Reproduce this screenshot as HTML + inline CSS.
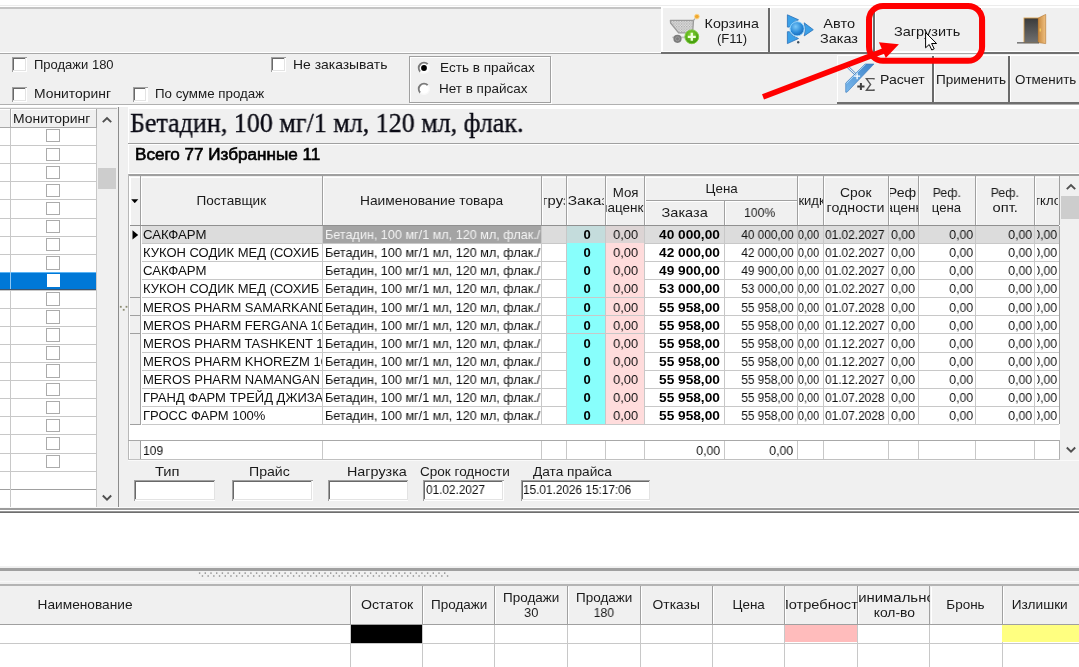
<!DOCTYPE html>
<html><head><meta charset="utf-8"><style>
html,body{margin:0;padding:0;}
body{width:1079px;height:667px;overflow:hidden;position:relative;background:#fff;font-family:"Liberation Sans", sans-serif;}
.a{position:absolute;}
.t{position:absolute;white-space:pre;will-change:transform;}
</style></head><body>
<div class="a" style="left:0px;top:5px;width:1079px;height:1px;background:#ececec;"></div>
<div class="a" style="left:0px;top:7px;width:661px;height:46px;background:#f0f0f0;"></div>
<div class="a" style="left:0px;top:7px;width:661px;height:2px;background:#c4c4c4;"></div>
<div class="a" style="left:0px;top:52px;width:661px;height:1px;background:#ffffff;"></div>
<div class="a" style="left:0px;top:53px;width:661px;height:1px;background:#a8a8a8;"></div>
<div class="a" style="left:661px;top:7px;width:418px;height:47px;background:#f0f0f0;"></div>
<div class="a" style="left:661px;top:7px;width:418px;height:1px;background:#ffffff;"></div>
<div class="a" style="left:661px;top:7px;width:2px;height:45px;background:#ffffff;"></div>
<div class="a" style="left:661px;top:51px;width:418px;height:1px;background:#ffffff;"></div>
<div class="a" style="left:661px;top:52px;width:418px;height:2px;background:#707070;"></div>
<div class="a" style="left:768px;top:8px;width:2px;height:44px;background:#6a6a6a;"></div>
<div class="a" style="left:770px;top:8px;width:1px;height:44px;background:#ffffff;"></div>
<div class="a" style="left:873px;top:8px;width:2px;height:44px;background:#6a6a6a;"></div>
<div class="a" style="left:875px;top:8px;width:1px;height:44px;background:#ffffff;"></div>
<div class="a" style="left:979px;top:8px;width:2px;height:44px;background:#6a6a6a;"></div>
<div class="a" style="left:981px;top:8px;width:1px;height:44px;background:#ffffff;"></div>
<div class="t" style="top:16.80px;font-size:13px;line-height:13px;color:#1a1a1a;left:707.23px;transform:scaleX(1.0963);transform-origin:50% 0;">Корзина</div>
<div class="t" style="top:31.60px;font-size:13px;line-height:13px;color:#1a1a1a;left:716.95px;transform:scaleX(1.0063);transform-origin:50% 0;">(F11)</div>
<div class="t" style="top:16.80px;font-size:13px;line-height:13px;color:#1a1a1a;left:824.63px;transform:scaleX(1.1184);transform-origin:50% 0;">Авто</div>
<div class="t" style="top:31.60px;font-size:13px;line-height:13px;color:#1a1a1a;left:822.05px;transform:scaleX(1.1111);transform-origin:50% 0;">Заказ</div>
<div class="t" style="top:24.70px;font-size:13px;line-height:13px;color:#1a1a1a;left:893.70px;transform:scaleX(1.1152);transform-origin:0 0;">Загрузить</div>
<div class="a" style="left:0px;top:54px;width:1079px;height:50px;background:#f0f0f0;"></div>
<div class="a" style="left:0px;top:104px;width:1079px;height:1px;background:#b0b0b0;"></div>
<div class="a" style="left:0px;top:105px;width:1079px;height:2px;background:#ffffff;"></div>
<div class="a" style="left:12px;top:57px;width:15px;height:15px;background:#ffffff;"></div>
<div class="a" style="left:12px;top:57px;width:15px;height:1.1px;background:#a0a0a0;"></div>
<div class="a" style="left:12px;top:57px;width:1.1px;height:15px;background:#a0a0a0;"></div>
<div class="a" style="left:13.1px;top:58.1px;width:12.8px;height:1.1px;background:#696969;"></div>
<div class="a" style="left:13.1px;top:58.1px;width:1.1px;height:12.8px;background:#696969;"></div>
<div class="a" style="left:13.1px;top:69.8px;width:12.8px;height:1.1px;background:#e3e3e3;"></div>
<div class="a" style="left:24.8px;top:58.1px;width:1.1px;height:12.8px;background:#e3e3e3;"></div>
<div class="t" style="top:57.50px;font-size:13px;line-height:13px;color:#1a1a1a;left:33.60px;">Продажи 180</div>
<div class="a" style="left:12px;top:87px;width:15px;height:15px;background:#ffffff;"></div>
<div class="a" style="left:12px;top:87px;width:15px;height:1.1px;background:#a0a0a0;"></div>
<div class="a" style="left:12px;top:87px;width:1.1px;height:15px;background:#a0a0a0;"></div>
<div class="a" style="left:13.1px;top:88.1px;width:12.8px;height:1.1px;background:#696969;"></div>
<div class="a" style="left:13.1px;top:88.1px;width:1.1px;height:12.8px;background:#696969;"></div>
<div class="a" style="left:13.1px;top:99.8px;width:12.8px;height:1.1px;background:#e3e3e3;"></div>
<div class="a" style="left:24.8px;top:88.1px;width:1.1px;height:12.8px;background:#e3e3e3;"></div>
<div class="t" style="top:87.00px;font-size:13px;line-height:13px;color:#1a1a1a;left:33.60px;transform:scaleX(1.0678);transform-origin:0 0;">Мониторинг</div>
<div class="a" style="left:132.6px;top:87px;width:15px;height:15px;background:#ffffff;"></div>
<div class="a" style="left:132.6px;top:87px;width:15px;height:1.1px;background:#a0a0a0;"></div>
<div class="a" style="left:132.6px;top:87px;width:1.1px;height:15px;background:#a0a0a0;"></div>
<div class="a" style="left:133.7px;top:88.1px;width:12.8px;height:1.1px;background:#696969;"></div>
<div class="a" style="left:133.7px;top:88.1px;width:1.1px;height:12.8px;background:#696969;"></div>
<div class="a" style="left:133.7px;top:99.8px;width:12.8px;height:1.1px;background:#e3e3e3;"></div>
<div class="a" style="left:145.4px;top:88.1px;width:1.1px;height:12.8px;background:#e3e3e3;"></div>
<div class="t" style="top:87.00px;font-size:13px;line-height:13px;color:#1a1a1a;left:155.00px;transform:scaleX(1.0246);transform-origin:0 0;">По сумме продаж</div>
<div class="a" style="left:271.2px;top:56.8px;width:15px;height:15px;background:#ffffff;"></div>
<div class="a" style="left:271.2px;top:56.8px;width:15px;height:1.1px;background:#a0a0a0;"></div>
<div class="a" style="left:271.2px;top:56.8px;width:1.1px;height:15px;background:#a0a0a0;"></div>
<div class="a" style="left:272.3px;top:57.9px;width:12.8px;height:1.1px;background:#696969;"></div>
<div class="a" style="left:272.3px;top:57.9px;width:1.1px;height:12.8px;background:#696969;"></div>
<div class="a" style="left:272.3px;top:69.6px;width:12.8px;height:1.1px;background:#e3e3e3;"></div>
<div class="a" style="left:284.0px;top:57.9px;width:1.1px;height:12.8px;background:#e3e3e3;"></div>
<div class="t" style="top:57.50px;font-size:13px;line-height:13px;color:#1a1a1a;left:293.10px;transform:scaleX(1.0701);transform-origin:0 0;">Не заказывать</div>
<div class="a" style="left:409px;top:56px;width:142px;height:47px;border:1px solid #a0a0a0;box-sizing:border-box;box-shadow:inset 1px 1px 0 #fff, 1px 1px 0 #fff;"></div>
<svg class="a" style="left:415.9px;top:60.0px;" width="16" height="16" viewBox="0 0 16 16"><circle cx="8" cy="8" r="5.6" fill="#ffffff"/><path d="M4.25 11.75 A5.3 5.3 0 0 1 11.75 4.25" fill="none" stroke="#7a7a7a" stroke-width="1.8"/><path d="M11.75 4.25 A5.3 5.3 0 0 1 4.25 11.75" fill="none" stroke="#f8f8f8" stroke-width="1.2"/><circle cx="8" cy="8" r="2.9" fill="#000"/></svg>
<div class="t" style="top:61.30px;font-size:13px;line-height:13px;color:#1a1a1a;left:440.10px;transform:scaleX(1.0432);transform-origin:0 0;">Есть в прайсах</div>
<svg class="a" style="left:415.9px;top:80.7px;" width="16" height="16" viewBox="0 0 16 16"><circle cx="8" cy="8" r="5.6" fill="#ffffff"/><path d="M4.25 11.75 A5.3 5.3 0 0 1 11.75 4.25" fill="none" stroke="#7a7a7a" stroke-width="1.8"/><path d="M11.75 4.25 A5.3 5.3 0 0 1 4.25 11.75" fill="none" stroke="#f8f8f8" stroke-width="1.2"/></svg>
<div class="t" style="top:82.00px;font-size:13px;line-height:13px;color:#1a1a1a;left:439.10px;transform:scaleX(1.0368);transform-origin:0 0;">Нет в прайсах</div>
<div class="a" style="left:837px;top:55px;width:242px;height:49px;background:#f0f0f0;"></div>
<div class="a" style="left:837px;top:55px;width:242px;height:1px;background:#ffffff;"></div>
<div class="a" style="left:837px;top:55px;width:1px;height:48px;background:#ffffff;"></div>
<div class="a" style="left:837px;top:102px;width:242px;height:2px;background:#6f6f6f;"></div>
<div class="a" style="left:932px;top:56px;width:1.5px;height:46px;background:#6a6a6a;"></div>
<div class="a" style="left:933.5px;top:56px;width:1px;height:46px;background:#ffffff;"></div>
<div class="a" style="left:1008px;top:56px;width:1.5px;height:46px;background:#6a6a6a;"></div>
<div class="a" style="left:1009.5px;top:56px;width:1px;height:46px;background:#ffffff;"></div>
<div class="t" style="top:72.70px;font-size:13px;line-height:13px;color:#1a1a1a;left:879.90px;transform:scaleX(1.0808);transform-origin:0 0;">Расчет</div>
<div class="t" style="top:72.70px;font-size:13px;line-height:13px;color:#1a1a1a;left:935.80px;transform:scaleX(1.0436);transform-origin:0 0;">Применить</div>
<div class="t" style="top:72.70px;font-size:13px;line-height:13px;color:#1a1a1a;left:1015.10px;transform:scaleX(1.0319);transform-origin:0 0;">Отменить</div>
<div class="a" style="left:0px;top:107px;width:128px;height:402px;background:#f0f0f0;"></div>
<div class="a" style="left:0px;top:108px;width:117px;height:1px;background:#c0c0c0;"></div>
<div class="a" style="left:0px;top:109px;width:97px;height:18px;background:#f0f0f0;"></div>
<div class="a" style="left:0px;top:109px;width:97px;height:1px;background:#ffffff;"></div>
<div class="a" style="left:0px;top:126.6px;width:97px;height:1px;background:#a8a8a8;"></div>
<div class="a" style="left:10px;top:109px;width:1px;height:18px;background:#a8a8a8;"></div>
<div class="a" style="left:11px;top:110px;width:1px;height:16px;background:#ffffff;"></div>
<div class="a" style="left:96px;top:109px;width:1px;height:18px;background:#a8a8a8;"></div>
<div class="t" style="top:112.20px;font-size:13px;line-height:13px;color:#1a1a1a;left:12.80px;transform:scaleX(1.0720);transform-origin:0 0;">Мониторинг</div>
<div class="a" style="left:0px;top:127.6px;width:96px;height:380px;background:#ffffff;"></div>
<div class="a" style="left:0px;top:145.2px;width:96px;height:1px;background:#c8c8c8;"></div>
<div class="a" style="left:0px;top:163.27999999999997px;width:96px;height:1px;background:#c8c8c8;"></div>
<div class="a" style="left:0px;top:181.35999999999999px;width:96px;height:1px;background:#c8c8c8;"></div>
<div class="a" style="left:0px;top:199.44px;width:96px;height:1px;background:#c8c8c8;"></div>
<div class="a" style="left:0px;top:217.51999999999998px;width:96px;height:1px;background:#c8c8c8;"></div>
<div class="a" style="left:0px;top:235.59999999999997px;width:96px;height:1px;background:#c8c8c8;"></div>
<div class="a" style="left:0px;top:253.67999999999998px;width:96px;height:1px;background:#c8c8c8;"></div>
<div class="a" style="left:0px;top:271.76px;width:96px;height:1px;background:#c8c8c8;"></div>
<div class="a" style="left:0px;top:289.84px;width:96px;height:1px;background:#c8c8c8;"></div>
<div class="a" style="left:0px;top:307.91999999999996px;width:96px;height:1px;background:#c8c8c8;"></div>
<div class="a" style="left:0px;top:326.0px;width:96px;height:1px;background:#c8c8c8;"></div>
<div class="a" style="left:0px;top:344.08px;width:96px;height:1px;background:#c8c8c8;"></div>
<div class="a" style="left:0px;top:362.15999999999997px;width:96px;height:1px;background:#c8c8c8;"></div>
<div class="a" style="left:0px;top:380.23999999999995px;width:96px;height:1px;background:#c8c8c8;"></div>
<div class="a" style="left:0px;top:398.31999999999994px;width:96px;height:1px;background:#c8c8c8;"></div>
<div class="a" style="left:0px;top:416.4px;width:96px;height:1px;background:#c8c8c8;"></div>
<div class="a" style="left:0px;top:434.47999999999996px;width:96px;height:1px;background:#c8c8c8;"></div>
<div class="a" style="left:0px;top:452.55999999999995px;width:96px;height:1px;background:#c8c8c8;"></div>
<div class="a" style="left:0px;top:471.0px;width:96px;height:1px;background:#c8c8c8;"></div>
<div class="a" style="left:10px;top:127.6px;width:1px;height:380px;background:#c8c8c8;"></div>
<div class="a" style="left:96px;top:127.6px;width:1px;height:380px;background:#c8c8c8;"></div>
<div class="a" style="left:46.4px;top:128.9px;width:13.6px;height:13.6px;border:1.2px solid #ababab;box-sizing:border-box;"></div>
<div class="a" style="left:46.4px;top:147.5px;width:13.6px;height:13.6px;border:1.2px solid #ababab;box-sizing:border-box;"></div>
<div class="a" style="left:46.4px;top:165.57999999999998px;width:13.6px;height:13.6px;border:1.2px solid #ababab;box-sizing:border-box;"></div>
<div class="a" style="left:46.4px;top:183.66px;width:13.6px;height:13.6px;border:1.2px solid #ababab;box-sizing:border-box;"></div>
<div class="a" style="left:46.4px;top:201.74px;width:13.6px;height:13.6px;border:1.2px solid #ababab;box-sizing:border-box;"></div>
<div class="a" style="left:46.4px;top:219.82px;width:13.6px;height:13.6px;border:1.2px solid #ababab;box-sizing:border-box;"></div>
<div class="a" style="left:46.4px;top:237.89999999999998px;width:13.6px;height:13.6px;border:1.2px solid #ababab;box-sizing:border-box;"></div>
<div class="a" style="left:46.4px;top:255.98px;width:13.6px;height:13.6px;border:1.2px solid #ababab;box-sizing:border-box;"></div>
<div class="a" style="left:0px;top:271.9px;width:96px;height:17.5px;background:#0078d7;"></div>
<div class="a" style="left:0px;top:271.9px;width:96px;height:1px;background:#59b4f5;"></div>
<div class="a" style="left:0px;top:288.6px;width:96px;height:1px;background:#3a5470;"></div>
<div class="a" style="left:10px;top:271.9px;width:1px;height:17.5px;background:#8ec8f5;"></div>
<div class="a" style="left:46.6px;top:273.8px;width:13.2px;height:13.7px;background:#ffffff;"></div>
<div class="a" style="left:46.4px;top:292.14px;width:13.6px;height:13.6px;border:1.2px solid #ababab;box-sizing:border-box;"></div>
<div class="a" style="left:46.4px;top:310.21999999999997px;width:13.6px;height:13.6px;border:1.2px solid #ababab;box-sizing:border-box;"></div>
<div class="a" style="left:46.4px;top:328.3px;width:13.6px;height:13.6px;border:1.2px solid #ababab;box-sizing:border-box;"></div>
<div class="a" style="left:46.4px;top:346.38px;width:13.6px;height:13.6px;border:1.2px solid #ababab;box-sizing:border-box;"></div>
<div class="a" style="left:46.4px;top:364.46px;width:13.6px;height:13.6px;border:1.2px solid #ababab;box-sizing:border-box;"></div>
<div class="a" style="left:46.4px;top:382.53999999999996px;width:13.6px;height:13.6px;border:1.2px solid #ababab;box-sizing:border-box;"></div>
<div class="a" style="left:46.4px;top:400.61999999999995px;width:13.6px;height:13.6px;border:1.2px solid #ababab;box-sizing:border-box;"></div>
<div class="a" style="left:46.4px;top:418.7px;width:13.6px;height:13.6px;border:1.2px solid #ababab;box-sizing:border-box;"></div>
<div class="a" style="left:46.4px;top:436.78px;width:13.6px;height:13.6px;border:1.2px solid #ababab;box-sizing:border-box;"></div>
<div class="a" style="left:46.4px;top:454.85999999999996px;width:13.6px;height:13.6px;border:1.2px solid #ababab;box-sizing:border-box;"></div>
<div class="a" style="left:0px;top:489.4px;width:96px;height:1px;background:#a0a0a0;"></div>
<div class="a" style="left:0px;top:490.4px;width:96px;height:17px;background:#ffffff;"></div>
<div class="a" style="left:10px;top:489.4px;width:1px;height:18px;background:#c8c8c8;"></div>
<div class="a" style="left:0px;top:507.4px;width:117px;height:1px;background:#c8c8c8;"></div>
<div class="a" style="left:97px;top:109px;width:20px;height:398.4px;background:#f0f0f0;"></div>
<div class="a" style="left:98.3px;top:168.3px;width:18px;height:20.4px;background:#cdcdcd;"></div>
<div class="a" style="left:118px;top:107px;width:1px;height:402.7px;background:#8c8c8c;"></div>
<svg class="a" style="left:119px;top:305px;" width="10" height="7" viewBox="0 0 10 7"><rect x="0.9" y="0.9" width="1.8" height="1.8" fill="#8a8a70"/><rect x="6.6" y="0.9" width="1.8" height="1.8" fill="#8a8a70"/><rect x="3.8" y="3.9" width="1.8" height="1.8" fill="#8a8a70"/></svg>
<svg class="a" style="left:101px;top:114px;" width="12" height="10" viewBox="0 0 12 10"><path d="M1.8 8.2 L6 4 L10.2 8.2" fill="none" stroke="#505050" stroke-width="1.9"/></svg>
<svg class="a" style="left:101px;top:493px;" width="12" height="10" viewBox="0 0 12 10"><path d="M1.8 2.5 L6 6.7 L10.2 2.5" fill="none" stroke="#505050" stroke-width="1.9"/></svg>
<div class="a" style="left:128px;top:109px;width:951px;height:400px;background:#f0f0f0;"></div>
<div class="a" style="left:128px;top:109px;width:1px;height:400px;background:#ffffff;"></div>
<div class="t" style="top:109.89px;font-size:27px;line-height:27px;color:#0a0a14;font-family:'Liberation Serif', serif;-webkit-text-stroke:0.35px #0a0a14;left:129.60px;transform:scaleX(0.9635);transform-origin:0 0;">Бетадин, 100 мг/1 мл, 120 мл, флак.</div>
<div class="a" style="left:128px;top:143px;width:951px;height:1px;background:#a0a0a0;"></div>
<div class="a" style="left:128px;top:144px;width:951px;height:1px;background:#ffffff;"></div>
<div class="t" style="top:146.66px;font-size:16px;line-height:16px;color:#000;-webkit-text-stroke:0.6px #000;left:134.70px;transform:scaleX(1.0681);transform-origin:0 0;">Всего 77 Избранные 11</div>
<div class="a" style="left:128px;top:173.3px;width:951px;height:1px;background:#ffffff;"></div>
<div class="a" style="left:128.3px;top:174.4px;width:950.7px;height:285px;background:#ffffff;"></div>
<div class="a" style="left:128.3px;top:174.4px;width:950.7px;height:1.2px;background:#a0a0a0;"></div>
<div class="a" style="left:128.3px;top:174.4px;width:1.2px;height:285px;background:#b8b8b8;"></div>
<div class="a" style="left:129.5px;top:175.6px;width:929.5px;height:49.4px;background:#f0f0f0;"></div>
<div class="a" style="left:129.5px;top:176.5px;width:929.5px;height:1px;background:#ffffff;"></div>
<div class="a" style="left:129.5px;top:224.9px;width:929.5px;height:1.1px;background:#909090;"></div>
<div class="a" style="left:644.5px;top:200px;width:152.7px;height:1px;background:#a0a0a0;"></div>
<div class="a" style="left:645.5px;top:201px;width:151.7px;height:1px;background:#ffffff;"></div>
<div class="a" style="left:140px;top:175.6px;width:1px;height:49.400000000000006px;background:#a0a0a0;"></div>
<div class="a" style="left:141px;top:176.6px;width:1px;height:48.400000000000006px;background:#ffffff;"></div>
<div class="a" style="left:322px;top:175.6px;width:1px;height:49.400000000000006px;background:#a0a0a0;"></div>
<div class="a" style="left:323px;top:176.6px;width:1px;height:48.400000000000006px;background:#ffffff;"></div>
<div class="a" style="left:541px;top:175.6px;width:1px;height:49.400000000000006px;background:#a0a0a0;"></div>
<div class="a" style="left:542px;top:176.6px;width:1px;height:48.400000000000006px;background:#ffffff;"></div>
<div class="a" style="left:566px;top:175.6px;width:1px;height:49.400000000000006px;background:#a0a0a0;"></div>
<div class="a" style="left:567px;top:176.6px;width:1px;height:48.400000000000006px;background:#ffffff;"></div>
<div class="a" style="left:605px;top:175.6px;width:1px;height:49.400000000000006px;background:#a0a0a0;"></div>
<div class="a" style="left:606px;top:176.6px;width:1px;height:48.400000000000006px;background:#ffffff;"></div>
<div class="a" style="left:644px;top:175.6px;width:1px;height:49.400000000000006px;background:#a0a0a0;"></div>
<div class="a" style="left:645px;top:176.6px;width:1px;height:48.400000000000006px;background:#ffffff;"></div>
<div class="a" style="left:724px;top:201px;width:1px;height:24px;background:#a0a0a0;"></div>
<div class="a" style="left:725px;top:202px;width:1px;height:23px;background:#ffffff;"></div>
<div class="a" style="left:797px;top:175.6px;width:1px;height:49.400000000000006px;background:#a0a0a0;"></div>
<div class="a" style="left:798px;top:176.6px;width:1px;height:48.400000000000006px;background:#ffffff;"></div>
<div class="a" style="left:823px;top:175.6px;width:1px;height:49.400000000000006px;background:#a0a0a0;"></div>
<div class="a" style="left:824px;top:176.6px;width:1px;height:48.400000000000006px;background:#ffffff;"></div>
<div class="a" style="left:888px;top:175.6px;width:1px;height:49.400000000000006px;background:#a0a0a0;"></div>
<div class="a" style="left:889px;top:176.6px;width:1px;height:48.400000000000006px;background:#ffffff;"></div>
<div class="a" style="left:918px;top:175.6px;width:1px;height:49.400000000000006px;background:#a0a0a0;"></div>
<div class="a" style="left:919px;top:176.6px;width:1px;height:48.400000000000006px;background:#ffffff;"></div>
<div class="a" style="left:975px;top:175.6px;width:1px;height:49.400000000000006px;background:#a0a0a0;"></div>
<div class="a" style="left:976px;top:176.6px;width:1px;height:48.400000000000006px;background:#ffffff;"></div>
<div class="a" style="left:1034px;top:175.6px;width:1px;height:49.400000000000006px;background:#a0a0a0;"></div>
<div class="a" style="left:1035px;top:176.6px;width:1px;height:48.400000000000006px;background:#ffffff;"></div>
<div class="a" style="left:1059px;top:175.6px;width:1px;height:49.400000000000006px;background:#a0a0a0;"></div>
<div class="a" style="left:1060px;top:176.6px;width:1px;height:48.400000000000006px;background:#ffffff;"></div>
<div class="a" style="left:130px;top:176.5px;width:1px;height:48.5px;background:#ffffff;"></div>
<svg class="a" style="left:131px;top:198.5px;" width="8" height="4.5" viewBox="0 0 8 4.5"><path d="M0.2 0.3 L7.3 0.3 L3.75 4.2 Z" fill="#000"/></svg>
<div class="t" style="top:194.10px;font-size:13px;line-height:13px;color:#1a1a1a;left:198.46px;transform:scaleX(1.0439);transform-origin:50% 0;">Поставщик</div>
<div class="t" style="top:194.10px;font-size:13px;line-height:13px;color:#1a1a1a;left:364.39px;transform:scaleX(1.0590);transform-origin:50% 0;">Наименование товара</div>
<div class="a" style="left:543.6px;top:0;width:21.899999999999977px;height:667px;overflow:hidden"><div class="a" style="left:-543.6px;top:0;width:1079px;height:667px"><div class="t" style="top:194.20px;font-size:13px;line-height:13px;color:#1a1a1a;left:526.55px;transform:scaleX(1.1329);transform-origin:50% 0;">Нагрузка</div></div></div>
<div class="a" style="left:566.6px;top:0;width:37.799999999999955px;height:667px;overflow:hidden"><div class="a" style="left:-566.6px;top:0;width:1079px;height:667px"><div class="t" style="top:193.80px;font-size:13px;line-height:13px;color:#1a1a1a;left:570.95px;transform:scaleX(1.1962);transform-origin:50% 0;">Заказ</div></div></div>
<div class="a" style="left:606.0px;top:0;width:37.60000000000002px;height:667px;overflow:hidden"><div class="a" style="left:-606.0px;top:0;width:1079px;height:667px"><div class="t" style="top:186.00px;font-size:13px;line-height:13px;color:#1a1a1a;left:612.58px;transform:scaleX(1.0218);transform-origin:50% 0;">Моя</div></div></div>
<div class="a" style="left:606.0px;top:0;width:37.60000000000002px;height:667px;overflow:hidden"><div class="a" style="left:-606.0px;top:0;width:1079px;height:667px"><div class="t" style="top:201.30px;font-size:13px;line-height:13px;color:#1a1a1a;left:600.54px;transform:scaleX(1.0400);transform-origin:50% 0;">наценка</div></div></div>
<div class="t" style="top:181.80px;font-size:13px;line-height:13px;color:#1a1a1a;left:705.77px;transform:scaleX(1.0267);transform-origin:50% 0;">Цена</div>
<div class="t" style="top:205.90px;font-size:13px;line-height:13px;color:#1a1a1a;left:663.83px;transform:scaleX(1.1175);transform-origin:50% 0;">Заказа</div>
<div class="t" style="top:205.90px;font-size:13px;line-height:13px;color:#1a1a1a;left:743.08px;transform:scaleX(0.9383);transform-origin:50% 0;">100%</div>
<div class="a" style="left:798.3px;top:0;width:25.100000000000023px;height:667px;overflow:hidden"><div class="a" style="left:-798.3px;top:0;width:1079px;height:667px"><div class="t" style="top:193.90px;font-size:13px;line-height:13px;color:#1a1a1a;left:788.93px;">Скидка</div></div></div>
<div class="t" style="top:186.00px;font-size:13px;line-height:13px;color:#1a1a1a;left:840.83px;transform:scaleX(1.0661);transform-origin:50% 0;">Срок</div>
<div class="t" style="top:201.30px;font-size:13px;line-height:13px;color:#1a1a1a;left:828.74px;transform:scaleX(1.0918);transform-origin:50% 0;">годности</div>
<div class="a" style="left:890.3px;top:0;width:27.300000000000068px;height:667px;overflow:hidden"><div class="a" style="left:-890.3px;top:0;width:1079px;height:667px"><div class="t" style="top:186.00px;font-size:13px;line-height:13px;color:#1a1a1a;left:888.78px;transform:scaleX(1.0872);transform-origin:50% 0;">Реф</div></div></div>
<div class="a" style="left:890.3px;top:0;width:27.300000000000068px;height:667px;overflow:hidden"><div class="a" style="left:-890.3px;top:0;width:1079px;height:667px"><div class="t" style="top:201.30px;font-size:13px;line-height:13px;color:#1a1a1a;left:878.84px;transform:scaleX(1.0400);transform-origin:50% 0;">наценка</div></div></div>
<div class="t" style="top:186.00px;font-size:13px;line-height:13px;color:#1a1a1a;left:931.98px;transform:scaleX(0.9548);transform-origin:50% 0;">Реф.</div>
<div class="t" style="top:201.30px;font-size:13px;line-height:13px;color:#1a1a1a;left:932.32px;transform:scaleX(1.0120);transform-origin:50% 0;">цена</div>
<div class="t" style="top:186.00px;font-size:13px;line-height:13px;color:#1a1a1a;left:990.38px;transform:scaleX(0.9548);transform-origin:50% 0;">Реф.</div>
<div class="t" style="top:201.30px;font-size:13px;line-height:13px;color:#1a1a1a;left:994.00px;transform:scaleX(1.1291);transform-origin:50% 0;">опт.</div>
<div class="a" style="left:1037.3px;top:0;width:21.200000000000045px;height:667px;overflow:hidden"><div class="a" style="left:-1037.3px;top:0;width:1079px;height:667px"><div class="t" style="top:193.90px;font-size:13px;line-height:13px;color:#1a1a1a;left:1023.90px;">Отклон</div></div></div>
<div class="a" style="left:129.5px;top:226.0px;width:10.9px;height:17.71999999999999px;background:#f0f0f0;"></div>
<div class="a" style="left:129.5px;top:242.82px;width:11px;height:0.9px;background:#a0a0a0;"></div>
<div class="a" style="left:140.4px;top:226.0px;width:1.1px;height:17.71999999999999px;background:#a0a0a0;"></div>
<div class="a" style="left:141.5px;top:226.0px;width:917.5px;height:16.819999999999993px;background:#dcdcdc;"></div>
<div class="a" style="left:322.6px;top:226.0px;width:218.5px;height:16.819999999999993px;background:#a4a4a4;"></div>
<div class="a" style="left:566.6px;top:226.0px;width:38.299999999999955px;height:16.819999999999993px;background:#c4dcdc;"></div>
<div class="a" style="left:606.0px;top:226.0px;width:37.60000000000002px;height:16.819999999999993px;background:#dcd4d4;"></div>
<svg class="a" style="left:132px;top:229.5px;" width="7" height="10" viewBox="0 0 7 10"><path d="M0.5 0.3 L6.2 4.9 L0.5 9.5 Z" fill="#000"/></svg>
<div class="a" style="left:141.5px;top:242.82px;width:917.5px;height:0.9px;background:#c8c8c8;"></div>
<div class="a" style="left:141.5px;top:0;width:180.89999999999998px;height:667px;overflow:hidden"><div class="a" style="left:-141.5px;top:0;width:1079px;height:667px"><div class="t" style="top:228.10px;font-size:13px;line-height:13px;color:#101010;left:142.80px;transform:scaleX(1.0155);transform-origin:0 0;">САКФАРМ</div></div></div>
<div class="a" style="left:323.5px;top:0;width:218.5px;height:667px;overflow:hidden"><div class="a" style="left:-323.5px;top:0;width:1079px;height:667px"><div class="t" style="top:228.10px;font-size:13px;line-height:13px;color:#f4f4f4;left:324.60px;transform:scaleX(0.9699);transform-origin:0 0;">Бетадин, 100 мг/1 мл, 120 мл, флак./</div></div></div>
<div class="t" style="top:228.10px;font-size:13px;line-height:13px;color:#000;font-weight:700;left:586.50px;transform:translateX(-50%);">0</div>
<div class="t" style="top:228.10px;font-size:13px;line-height:13px;color:#101010;left:612.54px;transform:scaleX(0.9877);transform-origin:50% 0;">0,00</div>
<div class="t" style="top:228.10px;font-size:13px;line-height:13px;color:#000;font-weight:700;right:358.90px;transform:scaleX(1.0511);transform-origin:100% 0;">40 000,00</div>
<div class="t" style="top:228.10px;font-size:13px;line-height:13px;color:#101010;right:284.90px;transform:scaleX(0.9076);transform-origin:100% 0;">40 000,00</div>
<div class="t" style="top:228.10px;font-size:13px;line-height:13px;color:#101010;right:259.40px;transform:scaleX(0.8494);transform-origin:100% 0;">0,00</div>
<div class="t" style="top:228.10px;font-size:13px;line-height:13px;color:#101010;left:825.30px;transform:scaleX(0.9158);transform-origin:0 0;">01.02.2027</div>
<div class="t" style="top:228.10px;font-size:13px;line-height:13px;color:#101010;left:891.20px;transform:scaleX(0.9521);transform-origin:0 0;">0,00</div>
<div class="t" style="top:228.10px;font-size:13px;line-height:13px;color:#101010;right:106.10px;transform:scaleX(0.9521);transform-origin:100% 0;">0,00</div>
<div class="t" style="top:228.10px;font-size:13px;line-height:13px;color:#101010;right:47.10px;transform:scaleX(0.9521);transform-origin:100% 0;">0,00</div>
<div class="a" style="left:1037.0px;top:0;width:22.40000000000009px;height:667px;overflow:hidden"><div class="a" style="left:-1037.0px;top:0;width:1079px;height:667px"><div class="t" style="top:228.10px;font-size:13px;line-height:13px;color:#101010;right:22.10px;transform:scaleX(0.9521);transform-origin:100% 0;">0,00</div></div></div>
<div class="a" style="left:129.5px;top:243.22px;width:10.9px;height:18.619999999999997px;background:#f0f0f0;"></div>
<div class="a" style="left:129.5px;top:260.94px;width:11px;height:0.9px;background:#a0a0a0;"></div>
<div class="a" style="left:140.4px;top:243.22px;width:1.1px;height:18.619999999999997px;background:#a0a0a0;"></div>
<div class="a" style="left:566.6px;top:243.22px;width:38.299999999999955px;height:17.72px;background:#88fffc;"></div>
<div class="a" style="left:606.0px;top:243.22px;width:37.60000000000002px;height:17.72px;background:#ffdcdc;"></div>
<div class="a" style="left:141.5px;top:260.94px;width:917.5px;height:0.9px;background:#c8c8c8;"></div>
<div class="a" style="left:141.5px;top:0;width:180.89999999999998px;height:667px;overflow:hidden"><div class="a" style="left:-141.5px;top:0;width:1079px;height:667px"><div class="t" style="top:246.22px;font-size:13px;line-height:13px;color:#101010;left:142.80px;">КУКОН СОДИК МЕД (СОХИБ (ФАРМ)</div></div></div>
<div class="a" style="left:323.5px;top:0;width:218.5px;height:667px;overflow:hidden"><div class="a" style="left:-323.5px;top:0;width:1079px;height:667px"><div class="t" style="top:246.22px;font-size:13px;line-height:13px;color:#101010;left:324.60px;transform:scaleX(0.9699);transform-origin:0 0;">Бетадин, 100 мг/1 мл, 120 мл, флак./</div></div></div>
<div class="t" style="top:246.22px;font-size:13px;line-height:13px;color:#000;font-weight:700;left:586.50px;transform:translateX(-50%);">0</div>
<div class="t" style="top:246.22px;font-size:13px;line-height:13px;color:#101010;left:612.54px;transform:scaleX(0.9877);transform-origin:50% 0;">0,00</div>
<div class="t" style="top:246.22px;font-size:13px;line-height:13px;color:#000;font-weight:700;right:358.90px;transform:scaleX(1.0511);transform-origin:100% 0;">42 000,00</div>
<div class="t" style="top:246.22px;font-size:13px;line-height:13px;color:#101010;right:284.90px;transform:scaleX(0.9076);transform-origin:100% 0;">42 000,00</div>
<div class="t" style="top:246.22px;font-size:13px;line-height:13px;color:#101010;right:259.40px;transform:scaleX(0.8494);transform-origin:100% 0;">0,00</div>
<div class="t" style="top:246.22px;font-size:13px;line-height:13px;color:#101010;left:825.30px;transform:scaleX(0.9158);transform-origin:0 0;">01.02.2027</div>
<div class="t" style="top:246.22px;font-size:13px;line-height:13px;color:#101010;left:891.20px;transform:scaleX(0.9521);transform-origin:0 0;">0,00</div>
<div class="t" style="top:246.22px;font-size:13px;line-height:13px;color:#101010;right:106.10px;transform:scaleX(0.9521);transform-origin:100% 0;">0,00</div>
<div class="t" style="top:246.22px;font-size:13px;line-height:13px;color:#101010;right:47.10px;transform:scaleX(0.9521);transform-origin:100% 0;">0,00</div>
<div class="a" style="left:1037.0px;top:0;width:22.40000000000009px;height:667px;overflow:hidden"><div class="a" style="left:-1037.0px;top:0;width:1079px;height:667px"><div class="t" style="top:246.22px;font-size:13px;line-height:13px;color:#101010;right:22.10px;transform:scaleX(0.9521);transform-origin:100% 0;">0,00</div></div></div>
<div class="a" style="left:129.5px;top:261.34px;width:10.9px;height:18.620000000000026px;background:#f0f0f0;"></div>
<div class="a" style="left:129.5px;top:279.06px;width:11px;height:0.9px;background:#a0a0a0;"></div>
<div class="a" style="left:140.4px;top:261.34px;width:1.1px;height:18.620000000000026px;background:#a0a0a0;"></div>
<div class="a" style="left:566.6px;top:261.34px;width:38.299999999999955px;height:17.720000000000027px;background:#88fffc;"></div>
<div class="a" style="left:606.0px;top:261.34px;width:37.60000000000002px;height:17.720000000000027px;background:#ffdcdc;"></div>
<div class="a" style="left:141.5px;top:279.06px;width:917.5px;height:0.9px;background:#c8c8c8;"></div>
<div class="a" style="left:141.5px;top:0;width:180.89999999999998px;height:667px;overflow:hidden"><div class="a" style="left:-141.5px;top:0;width:1079px;height:667px"><div class="t" style="top:264.34px;font-size:13px;line-height:13px;color:#101010;left:142.80px;transform:scaleX(1.0155);transform-origin:0 0;">САКФАРМ</div></div></div>
<div class="a" style="left:323.5px;top:0;width:218.5px;height:667px;overflow:hidden"><div class="a" style="left:-323.5px;top:0;width:1079px;height:667px"><div class="t" style="top:264.34px;font-size:13px;line-height:13px;color:#101010;left:324.60px;transform:scaleX(0.9699);transform-origin:0 0;">Бетадин, 100 мг/1 мл, 120 мл, флак./</div></div></div>
<div class="t" style="top:264.34px;font-size:13px;line-height:13px;color:#000;font-weight:700;left:586.50px;transform:translateX(-50%);">0</div>
<div class="t" style="top:264.34px;font-size:13px;line-height:13px;color:#101010;left:612.54px;transform:scaleX(0.9877);transform-origin:50% 0;">0,00</div>
<div class="t" style="top:264.34px;font-size:13px;line-height:13px;color:#000;font-weight:700;right:358.90px;transform:scaleX(1.0511);transform-origin:100% 0;">49 900,00</div>
<div class="t" style="top:264.34px;font-size:13px;line-height:13px;color:#101010;right:284.90px;transform:scaleX(0.9076);transform-origin:100% 0;">49 900,00</div>
<div class="t" style="top:264.34px;font-size:13px;line-height:13px;color:#101010;right:259.40px;transform:scaleX(0.8494);transform-origin:100% 0;">0,00</div>
<div class="t" style="top:264.34px;font-size:13px;line-height:13px;color:#101010;left:825.30px;transform:scaleX(0.9158);transform-origin:0 0;">01.02.2027</div>
<div class="t" style="top:264.34px;font-size:13px;line-height:13px;color:#101010;left:891.20px;transform:scaleX(0.9521);transform-origin:0 0;">0,00</div>
<div class="t" style="top:264.34px;font-size:13px;line-height:13px;color:#101010;right:106.10px;transform:scaleX(0.9521);transform-origin:100% 0;">0,00</div>
<div class="t" style="top:264.34px;font-size:13px;line-height:13px;color:#101010;right:47.10px;transform:scaleX(0.9521);transform-origin:100% 0;">0,00</div>
<div class="a" style="left:1037.0px;top:0;width:22.40000000000009px;height:667px;overflow:hidden"><div class="a" style="left:-1037.0px;top:0;width:1079px;height:667px"><div class="t" style="top:264.34px;font-size:13px;line-height:13px;color:#101010;right:22.10px;transform:scaleX(0.9521);transform-origin:100% 0;">0,00</div></div></div>
<div class="a" style="left:129.5px;top:279.46px;width:10.9px;height:18.620000000000026px;background:#f0f0f0;"></div>
<div class="a" style="left:129.5px;top:297.18px;width:11px;height:0.9px;background:#a0a0a0;"></div>
<div class="a" style="left:140.4px;top:279.46px;width:1.1px;height:18.620000000000026px;background:#a0a0a0;"></div>
<div class="a" style="left:566.6px;top:279.46px;width:38.299999999999955px;height:17.720000000000027px;background:#88fffc;"></div>
<div class="a" style="left:606.0px;top:279.46px;width:37.60000000000002px;height:17.720000000000027px;background:#ffdcdc;"></div>
<div class="a" style="left:141.5px;top:297.18px;width:917.5px;height:0.9px;background:#c8c8c8;"></div>
<div class="a" style="left:141.5px;top:0;width:180.89999999999998px;height:667px;overflow:hidden"><div class="a" style="left:-141.5px;top:0;width:1079px;height:667px"><div class="t" style="top:282.46px;font-size:13px;line-height:13px;color:#101010;left:142.80px;">КУКОН СОДИК МЕД (СОХИБ (ФАРМ)</div></div></div>
<div class="a" style="left:323.5px;top:0;width:218.5px;height:667px;overflow:hidden"><div class="a" style="left:-323.5px;top:0;width:1079px;height:667px"><div class="t" style="top:282.46px;font-size:13px;line-height:13px;color:#101010;left:324.60px;transform:scaleX(0.9699);transform-origin:0 0;">Бетадин, 100 мг/1 мл, 120 мл, флак./</div></div></div>
<div class="t" style="top:282.46px;font-size:13px;line-height:13px;color:#000;font-weight:700;left:586.50px;transform:translateX(-50%);">0</div>
<div class="t" style="top:282.46px;font-size:13px;line-height:13px;color:#101010;left:612.54px;transform:scaleX(0.9877);transform-origin:50% 0;">0,00</div>
<div class="t" style="top:282.46px;font-size:13px;line-height:13px;color:#000;font-weight:700;right:358.90px;transform:scaleX(1.0511);transform-origin:100% 0;">53 000,00</div>
<div class="t" style="top:282.46px;font-size:13px;line-height:13px;color:#101010;right:284.90px;transform:scaleX(0.9076);transform-origin:100% 0;">53 000,00</div>
<div class="t" style="top:282.46px;font-size:13px;line-height:13px;color:#101010;right:259.40px;transform:scaleX(0.8494);transform-origin:100% 0;">0,00</div>
<div class="t" style="top:282.46px;font-size:13px;line-height:13px;color:#101010;left:825.30px;transform:scaleX(0.9158);transform-origin:0 0;">01.02.2027</div>
<div class="t" style="top:282.46px;font-size:13px;line-height:13px;color:#101010;left:891.20px;transform:scaleX(0.9521);transform-origin:0 0;">0,00</div>
<div class="t" style="top:282.46px;font-size:13px;line-height:13px;color:#101010;right:106.10px;transform:scaleX(0.9521);transform-origin:100% 0;">0,00</div>
<div class="t" style="top:282.46px;font-size:13px;line-height:13px;color:#101010;right:47.10px;transform:scaleX(0.9521);transform-origin:100% 0;">0,00</div>
<div class="a" style="left:1037.0px;top:0;width:22.40000000000009px;height:667px;overflow:hidden"><div class="a" style="left:-1037.0px;top:0;width:1079px;height:667px"><div class="t" style="top:282.46px;font-size:13px;line-height:13px;color:#101010;right:22.10px;transform:scaleX(0.9521);transform-origin:100% 0;">0,00</div></div></div>
<div class="a" style="left:129.5px;top:297.58px;width:10.9px;height:18.620000000000026px;background:#f0f0f0;"></div>
<div class="a" style="left:129.5px;top:315.3px;width:11px;height:0.9px;background:#a0a0a0;"></div>
<div class="a" style="left:140.4px;top:297.58px;width:1.1px;height:18.620000000000026px;background:#a0a0a0;"></div>
<div class="a" style="left:566.6px;top:297.58px;width:38.299999999999955px;height:17.720000000000027px;background:#88fffc;"></div>
<div class="a" style="left:606.0px;top:297.58px;width:37.60000000000002px;height:17.720000000000027px;background:#ffdcdc;"></div>
<div class="a" style="left:141.5px;top:315.3px;width:917.5px;height:0.9px;background:#c8c8c8;"></div>
<div class="a" style="left:141.5px;top:0;width:180.89999999999998px;height:667px;overflow:hidden"><div class="a" style="left:-141.5px;top:0;width:1079px;height:667px"><div class="t" style="top:300.58px;font-size:13px;line-height:13px;color:#101010;left:142.80px;">MEROS PHARM SAMARKAND 100%</div></div></div>
<div class="a" style="left:323.5px;top:0;width:218.5px;height:667px;overflow:hidden"><div class="a" style="left:-323.5px;top:0;width:1079px;height:667px"><div class="t" style="top:300.58px;font-size:13px;line-height:13px;color:#101010;left:324.60px;transform:scaleX(0.9699);transform-origin:0 0;">Бетадин, 100 мг/1 мл, 120 мл, флак./</div></div></div>
<div class="t" style="top:300.58px;font-size:13px;line-height:13px;color:#000;font-weight:700;left:586.50px;transform:translateX(-50%);">0</div>
<div class="t" style="top:300.58px;font-size:13px;line-height:13px;color:#101010;left:612.54px;transform:scaleX(0.9877);transform-origin:50% 0;">0,00</div>
<div class="t" style="top:300.58px;font-size:13px;line-height:13px;color:#000;font-weight:700;right:358.90px;transform:scaleX(1.0511);transform-origin:100% 0;">55 958,00</div>
<div class="t" style="top:300.58px;font-size:13px;line-height:13px;color:#101010;right:284.90px;transform:scaleX(0.9076);transform-origin:100% 0;">55 958,00</div>
<div class="t" style="top:300.58px;font-size:13px;line-height:13px;color:#101010;right:259.40px;transform:scaleX(0.8494);transform-origin:100% 0;">0,00</div>
<div class="t" style="top:300.58px;font-size:13px;line-height:13px;color:#101010;left:825.30px;transform:scaleX(0.9158);transform-origin:0 0;">01.07.2028</div>
<div class="t" style="top:300.58px;font-size:13px;line-height:13px;color:#101010;left:891.20px;transform:scaleX(0.9521);transform-origin:0 0;">0,00</div>
<div class="t" style="top:300.58px;font-size:13px;line-height:13px;color:#101010;right:106.10px;transform:scaleX(0.9521);transform-origin:100% 0;">0,00</div>
<div class="t" style="top:300.58px;font-size:13px;line-height:13px;color:#101010;right:47.10px;transform:scaleX(0.9521);transform-origin:100% 0;">0,00</div>
<div class="a" style="left:1037.0px;top:0;width:22.40000000000009px;height:667px;overflow:hidden"><div class="a" style="left:-1037.0px;top:0;width:1079px;height:667px"><div class="t" style="top:300.58px;font-size:13px;line-height:13px;color:#101010;right:22.10px;transform:scaleX(0.9521);transform-origin:100% 0;">0,00</div></div></div>
<div class="a" style="left:129.5px;top:315.7px;width:10.9px;height:18.620000000000026px;background:#f0f0f0;"></div>
<div class="a" style="left:129.5px;top:333.42px;width:11px;height:0.9px;background:#a0a0a0;"></div>
<div class="a" style="left:140.4px;top:315.7px;width:1.1px;height:18.620000000000026px;background:#a0a0a0;"></div>
<div class="a" style="left:566.6px;top:315.7px;width:38.299999999999955px;height:17.720000000000027px;background:#88fffc;"></div>
<div class="a" style="left:606.0px;top:315.7px;width:37.60000000000002px;height:17.720000000000027px;background:#ffdcdc;"></div>
<div class="a" style="left:141.5px;top:333.42px;width:917.5px;height:0.9px;background:#c8c8c8;"></div>
<div class="a" style="left:141.5px;top:0;width:180.89999999999998px;height:667px;overflow:hidden"><div class="a" style="left:-141.5px;top:0;width:1079px;height:667px"><div class="t" style="top:318.70px;font-size:13px;line-height:13px;color:#101010;left:142.80px;">MEROS PHARM FERGANA 100%</div></div></div>
<div class="a" style="left:323.5px;top:0;width:218.5px;height:667px;overflow:hidden"><div class="a" style="left:-323.5px;top:0;width:1079px;height:667px"><div class="t" style="top:318.70px;font-size:13px;line-height:13px;color:#101010;left:324.60px;transform:scaleX(0.9699);transform-origin:0 0;">Бетадин, 100 мг/1 мл, 120 мл, флак./</div></div></div>
<div class="t" style="top:318.70px;font-size:13px;line-height:13px;color:#000;font-weight:700;left:586.50px;transform:translateX(-50%);">0</div>
<div class="t" style="top:318.70px;font-size:13px;line-height:13px;color:#101010;left:612.54px;transform:scaleX(0.9877);transform-origin:50% 0;">0,00</div>
<div class="t" style="top:318.70px;font-size:13px;line-height:13px;color:#000;font-weight:700;right:358.90px;transform:scaleX(1.0511);transform-origin:100% 0;">55 958,00</div>
<div class="t" style="top:318.70px;font-size:13px;line-height:13px;color:#101010;right:284.90px;transform:scaleX(0.9076);transform-origin:100% 0;">55 958,00</div>
<div class="t" style="top:318.70px;font-size:13px;line-height:13px;color:#101010;right:259.40px;transform:scaleX(0.8494);transform-origin:100% 0;">0,00</div>
<div class="t" style="top:318.70px;font-size:13px;line-height:13px;color:#101010;left:825.30px;transform:scaleX(0.9158);transform-origin:0 0;">01.12.2027</div>
<div class="t" style="top:318.70px;font-size:13px;line-height:13px;color:#101010;left:891.20px;transform:scaleX(0.9521);transform-origin:0 0;">0,00</div>
<div class="t" style="top:318.70px;font-size:13px;line-height:13px;color:#101010;right:106.10px;transform:scaleX(0.9521);transform-origin:100% 0;">0,00</div>
<div class="t" style="top:318.70px;font-size:13px;line-height:13px;color:#101010;right:47.10px;transform:scaleX(0.9521);transform-origin:100% 0;">0,00</div>
<div class="a" style="left:1037.0px;top:0;width:22.40000000000009px;height:667px;overflow:hidden"><div class="a" style="left:-1037.0px;top:0;width:1079px;height:667px"><div class="t" style="top:318.70px;font-size:13px;line-height:13px;color:#101010;right:22.10px;transform:scaleX(0.9521);transform-origin:100% 0;">0,00</div></div></div>
<div class="a" style="left:129.5px;top:333.82px;width:10.9px;height:18.620000000000026px;background:#f0f0f0;"></div>
<div class="a" style="left:129.5px;top:351.54px;width:11px;height:0.9px;background:#a0a0a0;"></div>
<div class="a" style="left:140.4px;top:333.82px;width:1.1px;height:18.620000000000026px;background:#a0a0a0;"></div>
<div class="a" style="left:566.6px;top:333.82px;width:38.299999999999955px;height:17.720000000000027px;background:#88fffc;"></div>
<div class="a" style="left:606.0px;top:333.82px;width:37.60000000000002px;height:17.720000000000027px;background:#ffdcdc;"></div>
<div class="a" style="left:141.5px;top:351.54px;width:917.5px;height:0.9px;background:#c8c8c8;"></div>
<div class="a" style="left:141.5px;top:0;width:180.89999999999998px;height:667px;overflow:hidden"><div class="a" style="left:-141.5px;top:0;width:1079px;height:667px"><div class="t" style="top:336.82px;font-size:13px;line-height:13px;color:#101010;left:142.80px;">MEROS PHARM TASHKENT 100%</div></div></div>
<div class="a" style="left:323.5px;top:0;width:218.5px;height:667px;overflow:hidden"><div class="a" style="left:-323.5px;top:0;width:1079px;height:667px"><div class="t" style="top:336.82px;font-size:13px;line-height:13px;color:#101010;left:324.60px;transform:scaleX(0.9699);transform-origin:0 0;">Бетадин, 100 мг/1 мл, 120 мл, флак./</div></div></div>
<div class="t" style="top:336.82px;font-size:13px;line-height:13px;color:#000;font-weight:700;left:586.50px;transform:translateX(-50%);">0</div>
<div class="t" style="top:336.82px;font-size:13px;line-height:13px;color:#101010;left:612.54px;transform:scaleX(0.9877);transform-origin:50% 0;">0,00</div>
<div class="t" style="top:336.82px;font-size:13px;line-height:13px;color:#000;font-weight:700;right:358.90px;transform:scaleX(1.0511);transform-origin:100% 0;">55 958,00</div>
<div class="t" style="top:336.82px;font-size:13px;line-height:13px;color:#101010;right:284.90px;transform:scaleX(0.9076);transform-origin:100% 0;">55 958,00</div>
<div class="t" style="top:336.82px;font-size:13px;line-height:13px;color:#101010;right:259.40px;transform:scaleX(0.8494);transform-origin:100% 0;">0,00</div>
<div class="t" style="top:336.82px;font-size:13px;line-height:13px;color:#101010;left:825.30px;transform:scaleX(0.9158);transform-origin:0 0;">01.12.2027</div>
<div class="t" style="top:336.82px;font-size:13px;line-height:13px;color:#101010;left:891.20px;transform:scaleX(0.9521);transform-origin:0 0;">0,00</div>
<div class="t" style="top:336.82px;font-size:13px;line-height:13px;color:#101010;right:106.10px;transform:scaleX(0.9521);transform-origin:100% 0;">0,00</div>
<div class="t" style="top:336.82px;font-size:13px;line-height:13px;color:#101010;right:47.10px;transform:scaleX(0.9521);transform-origin:100% 0;">0,00</div>
<div class="a" style="left:1037.0px;top:0;width:22.40000000000009px;height:667px;overflow:hidden"><div class="a" style="left:-1037.0px;top:0;width:1079px;height:667px"><div class="t" style="top:336.82px;font-size:13px;line-height:13px;color:#101010;right:22.10px;transform:scaleX(0.9521);transform-origin:100% 0;">0,00</div></div></div>
<div class="a" style="left:129.5px;top:351.94px;width:10.9px;height:18.620000000000026px;background:#f0f0f0;"></div>
<div class="a" style="left:129.5px;top:369.66px;width:11px;height:0.9px;background:#a0a0a0;"></div>
<div class="a" style="left:140.4px;top:351.94px;width:1.1px;height:18.620000000000026px;background:#a0a0a0;"></div>
<div class="a" style="left:566.6px;top:351.94px;width:38.299999999999955px;height:17.720000000000027px;background:#88fffc;"></div>
<div class="a" style="left:606.0px;top:351.94px;width:37.60000000000002px;height:17.720000000000027px;background:#ffdcdc;"></div>
<div class="a" style="left:141.5px;top:369.66px;width:917.5px;height:0.9px;background:#c8c8c8;"></div>
<div class="a" style="left:141.5px;top:0;width:180.89999999999998px;height:667px;overflow:hidden"><div class="a" style="left:-141.5px;top:0;width:1079px;height:667px"><div class="t" style="top:354.94px;font-size:13px;line-height:13px;color:#101010;left:142.80px;">MEROS PHARM KHOREZM 100%</div></div></div>
<div class="a" style="left:323.5px;top:0;width:218.5px;height:667px;overflow:hidden"><div class="a" style="left:-323.5px;top:0;width:1079px;height:667px"><div class="t" style="top:354.94px;font-size:13px;line-height:13px;color:#101010;left:324.60px;transform:scaleX(0.9699);transform-origin:0 0;">Бетадин, 100 мг/1 мл, 120 мл, флак./</div></div></div>
<div class="t" style="top:354.94px;font-size:13px;line-height:13px;color:#000;font-weight:700;left:586.50px;transform:translateX(-50%);">0</div>
<div class="t" style="top:354.94px;font-size:13px;line-height:13px;color:#101010;left:612.54px;transform:scaleX(0.9877);transform-origin:50% 0;">0,00</div>
<div class="t" style="top:354.94px;font-size:13px;line-height:13px;color:#000;font-weight:700;right:358.90px;transform:scaleX(1.0511);transform-origin:100% 0;">55 958,00</div>
<div class="t" style="top:354.94px;font-size:13px;line-height:13px;color:#101010;right:284.90px;transform:scaleX(0.9076);transform-origin:100% 0;">55 958,00</div>
<div class="t" style="top:354.94px;font-size:13px;line-height:13px;color:#101010;right:259.40px;transform:scaleX(0.8494);transform-origin:100% 0;">0,00</div>
<div class="t" style="top:354.94px;font-size:13px;line-height:13px;color:#101010;left:825.30px;transform:scaleX(0.9158);transform-origin:0 0;">01.12.2027</div>
<div class="t" style="top:354.94px;font-size:13px;line-height:13px;color:#101010;left:891.20px;transform:scaleX(0.9521);transform-origin:0 0;">0,00</div>
<div class="t" style="top:354.94px;font-size:13px;line-height:13px;color:#101010;right:106.10px;transform:scaleX(0.9521);transform-origin:100% 0;">0,00</div>
<div class="t" style="top:354.94px;font-size:13px;line-height:13px;color:#101010;right:47.10px;transform:scaleX(0.9521);transform-origin:100% 0;">0,00</div>
<div class="a" style="left:1037.0px;top:0;width:22.40000000000009px;height:667px;overflow:hidden"><div class="a" style="left:-1037.0px;top:0;width:1079px;height:667px"><div class="t" style="top:354.94px;font-size:13px;line-height:13px;color:#101010;right:22.10px;transform:scaleX(0.9521);transform-origin:100% 0;">0,00</div></div></div>
<div class="a" style="left:129.5px;top:370.06px;width:10.9px;height:18.620000000000026px;background:#f0f0f0;"></div>
<div class="a" style="left:129.5px;top:387.78000000000003px;width:11px;height:0.9px;background:#a0a0a0;"></div>
<div class="a" style="left:140.4px;top:370.06px;width:1.1px;height:18.620000000000026px;background:#a0a0a0;"></div>
<div class="a" style="left:566.6px;top:370.06px;width:38.299999999999955px;height:17.720000000000027px;background:#88fffc;"></div>
<div class="a" style="left:606.0px;top:370.06px;width:37.60000000000002px;height:17.720000000000027px;background:#ffdcdc;"></div>
<div class="a" style="left:141.5px;top:387.78000000000003px;width:917.5px;height:0.9px;background:#c8c8c8;"></div>
<div class="a" style="left:141.5px;top:0;width:180.89999999999998px;height:667px;overflow:hidden"><div class="a" style="left:-141.5px;top:0;width:1079px;height:667px"><div class="t" style="top:373.06px;font-size:13px;line-height:13px;color:#101010;left:142.80px;">MEROS PHARM NAMANGAN 100%</div></div></div>
<div class="a" style="left:323.5px;top:0;width:218.5px;height:667px;overflow:hidden"><div class="a" style="left:-323.5px;top:0;width:1079px;height:667px"><div class="t" style="top:373.06px;font-size:13px;line-height:13px;color:#101010;left:324.60px;transform:scaleX(0.9699);transform-origin:0 0;">Бетадин, 100 мг/1 мл, 120 мл, флак./</div></div></div>
<div class="t" style="top:373.06px;font-size:13px;line-height:13px;color:#000;font-weight:700;left:586.50px;transform:translateX(-50%);">0</div>
<div class="t" style="top:373.06px;font-size:13px;line-height:13px;color:#101010;left:612.54px;transform:scaleX(0.9877);transform-origin:50% 0;">0,00</div>
<div class="t" style="top:373.06px;font-size:13px;line-height:13px;color:#000;font-weight:700;right:358.90px;transform:scaleX(1.0511);transform-origin:100% 0;">55 958,00</div>
<div class="t" style="top:373.06px;font-size:13px;line-height:13px;color:#101010;right:284.90px;transform:scaleX(0.9076);transform-origin:100% 0;">55 958,00</div>
<div class="t" style="top:373.06px;font-size:13px;line-height:13px;color:#101010;right:259.40px;transform:scaleX(0.8494);transform-origin:100% 0;">0,00</div>
<div class="t" style="top:373.06px;font-size:13px;line-height:13px;color:#101010;left:825.30px;transform:scaleX(0.9158);transform-origin:0 0;">01.12.2027</div>
<div class="t" style="top:373.06px;font-size:13px;line-height:13px;color:#101010;left:891.20px;transform:scaleX(0.9521);transform-origin:0 0;">0,00</div>
<div class="t" style="top:373.06px;font-size:13px;line-height:13px;color:#101010;right:106.10px;transform:scaleX(0.9521);transform-origin:100% 0;">0,00</div>
<div class="t" style="top:373.06px;font-size:13px;line-height:13px;color:#101010;right:47.10px;transform:scaleX(0.9521);transform-origin:100% 0;">0,00</div>
<div class="a" style="left:1037.0px;top:0;width:22.40000000000009px;height:667px;overflow:hidden"><div class="a" style="left:-1037.0px;top:0;width:1079px;height:667px"><div class="t" style="top:373.06px;font-size:13px;line-height:13px;color:#101010;right:22.10px;transform:scaleX(0.9521);transform-origin:100% 0;">0,00</div></div></div>
<div class="a" style="left:129.5px;top:388.18px;width:10.9px;height:18.620000000000026px;background:#f0f0f0;"></div>
<div class="a" style="left:129.5px;top:405.90000000000003px;width:11px;height:0.9px;background:#a0a0a0;"></div>
<div class="a" style="left:140.4px;top:388.18px;width:1.1px;height:18.620000000000026px;background:#a0a0a0;"></div>
<div class="a" style="left:566.6px;top:388.18px;width:38.299999999999955px;height:17.720000000000027px;background:#88fffc;"></div>
<div class="a" style="left:606.0px;top:388.18px;width:37.60000000000002px;height:17.720000000000027px;background:#ffdcdc;"></div>
<div class="a" style="left:141.5px;top:405.90000000000003px;width:917.5px;height:0.9px;background:#c8c8c8;"></div>
<div class="a" style="left:141.5px;top:0;width:180.89999999999998px;height:667px;overflow:hidden"><div class="a" style="left:-141.5px;top:0;width:1079px;height:667px"><div class="t" style="top:391.18px;font-size:13px;line-height:13px;color:#101010;left:142.80px;">ГРАНД ФАРМ ТРЕЙД ДЖИЗАК</div></div></div>
<div class="a" style="left:323.5px;top:0;width:218.5px;height:667px;overflow:hidden"><div class="a" style="left:-323.5px;top:0;width:1079px;height:667px"><div class="t" style="top:391.18px;font-size:13px;line-height:13px;color:#101010;left:324.60px;transform:scaleX(0.9699);transform-origin:0 0;">Бетадин, 100 мг/1 мл, 120 мл, флак./</div></div></div>
<div class="t" style="top:391.18px;font-size:13px;line-height:13px;color:#000;font-weight:700;left:586.50px;transform:translateX(-50%);">0</div>
<div class="t" style="top:391.18px;font-size:13px;line-height:13px;color:#101010;left:612.54px;transform:scaleX(0.9877);transform-origin:50% 0;">0,00</div>
<div class="t" style="top:391.18px;font-size:13px;line-height:13px;color:#000;font-weight:700;right:358.90px;transform:scaleX(1.0511);transform-origin:100% 0;">55 958,00</div>
<div class="t" style="top:391.18px;font-size:13px;line-height:13px;color:#101010;right:284.90px;transform:scaleX(0.9076);transform-origin:100% 0;">55 958,00</div>
<div class="t" style="top:391.18px;font-size:13px;line-height:13px;color:#101010;right:259.40px;transform:scaleX(0.8494);transform-origin:100% 0;">0,00</div>
<div class="t" style="top:391.18px;font-size:13px;line-height:13px;color:#101010;left:825.30px;transform:scaleX(0.9158);transform-origin:0 0;">01.07.2028</div>
<div class="t" style="top:391.18px;font-size:13px;line-height:13px;color:#101010;left:891.20px;transform:scaleX(0.9521);transform-origin:0 0;">0,00</div>
<div class="t" style="top:391.18px;font-size:13px;line-height:13px;color:#101010;right:106.10px;transform:scaleX(0.9521);transform-origin:100% 0;">0,00</div>
<div class="t" style="top:391.18px;font-size:13px;line-height:13px;color:#101010;right:47.10px;transform:scaleX(0.9521);transform-origin:100% 0;">0,00</div>
<div class="a" style="left:1037.0px;top:0;width:22.40000000000009px;height:667px;overflow:hidden"><div class="a" style="left:-1037.0px;top:0;width:1079px;height:667px"><div class="t" style="top:391.18px;font-size:13px;line-height:13px;color:#101010;right:22.10px;transform:scaleX(0.9521);transform-origin:100% 0;">0,00</div></div></div>
<div class="a" style="left:129.5px;top:406.3px;width:10.9px;height:18.620000000000026px;background:#f0f0f0;"></div>
<div class="a" style="left:129.5px;top:424.02000000000004px;width:11px;height:0.9px;background:#a0a0a0;"></div>
<div class="a" style="left:140.4px;top:406.3px;width:1.1px;height:18.620000000000026px;background:#a0a0a0;"></div>
<div class="a" style="left:566.6px;top:406.3px;width:38.299999999999955px;height:17.720000000000027px;background:#88fffc;"></div>
<div class="a" style="left:606.0px;top:406.3px;width:37.60000000000002px;height:17.720000000000027px;background:#ffdcdc;"></div>
<div class="a" style="left:141.5px;top:424.02000000000004px;width:917.5px;height:0.9px;background:#c8c8c8;"></div>
<div class="a" style="left:141.5px;top:0;width:180.89999999999998px;height:667px;overflow:hidden"><div class="a" style="left:-141.5px;top:0;width:1079px;height:667px"><div class="t" style="top:409.30px;font-size:13px;line-height:13px;color:#101010;left:142.80px;">ГРОСС ФАРМ 100%</div></div></div>
<div class="a" style="left:323.5px;top:0;width:218.5px;height:667px;overflow:hidden"><div class="a" style="left:-323.5px;top:0;width:1079px;height:667px"><div class="t" style="top:409.30px;font-size:13px;line-height:13px;color:#101010;left:324.60px;transform:scaleX(0.9699);transform-origin:0 0;">Бетадин, 100 мг/1 мл, 120 мл, флак./</div></div></div>
<div class="t" style="top:409.30px;font-size:13px;line-height:13px;color:#000;font-weight:700;left:586.50px;transform:translateX(-50%);">0</div>
<div class="t" style="top:409.30px;font-size:13px;line-height:13px;color:#101010;left:612.54px;transform:scaleX(0.9877);transform-origin:50% 0;">0,00</div>
<div class="t" style="top:409.30px;font-size:13px;line-height:13px;color:#000;font-weight:700;right:358.90px;transform:scaleX(1.0511);transform-origin:100% 0;">55 958,00</div>
<div class="t" style="top:409.30px;font-size:13px;line-height:13px;color:#101010;right:284.90px;transform:scaleX(0.9076);transform-origin:100% 0;">55 958,00</div>
<div class="t" style="top:409.30px;font-size:13px;line-height:13px;color:#101010;right:259.40px;transform:scaleX(0.8494);transform-origin:100% 0;">0,00</div>
<div class="t" style="top:409.30px;font-size:13px;line-height:13px;color:#101010;left:825.30px;transform:scaleX(0.9158);transform-origin:0 0;">01.07.2028</div>
<div class="t" style="top:409.30px;font-size:13px;line-height:13px;color:#101010;left:891.20px;transform:scaleX(0.9521);transform-origin:0 0;">0,00</div>
<div class="t" style="top:409.30px;font-size:13px;line-height:13px;color:#101010;right:106.10px;transform:scaleX(0.9521);transform-origin:100% 0;">0,00</div>
<div class="t" style="top:409.30px;font-size:13px;line-height:13px;color:#101010;right:47.10px;transform:scaleX(0.9521);transform-origin:100% 0;">0,00</div>
<div class="a" style="left:1037.0px;top:0;width:22.40000000000009px;height:667px;overflow:hidden"><div class="a" style="left:-1037.0px;top:0;width:1079px;height:667px"><div class="t" style="top:409.30px;font-size:13px;line-height:13px;color:#101010;right:22.10px;transform:scaleX(0.9521);transform-origin:100% 0;">0,00</div></div></div>
<div class="a" style="left:322px;top:225.9px;width:1.0px;height:198.49999999999997px;background:#c8c8c8;"></div>
<div class="a" style="left:541px;top:225.9px;width:1.0px;height:198.49999999999997px;background:#c8c8c8;"></div>
<div class="a" style="left:566px;top:225.9px;width:1.0px;height:198.49999999999997px;background:#c8c8c8;"></div>
<div class="a" style="left:605px;top:225.9px;width:1.0px;height:198.49999999999997px;background:#c8c8c8;"></div>
<div class="a" style="left:644px;top:225.9px;width:1.0px;height:198.49999999999997px;background:#c8c8c8;"></div>
<div class="a" style="left:724px;top:225.9px;width:1.0px;height:198.49999999999997px;background:#c8c8c8;"></div>
<div class="a" style="left:797px;top:225.9px;width:1.0px;height:198.49999999999997px;background:#c8c8c8;"></div>
<div class="a" style="left:823px;top:225.9px;width:1.0px;height:198.49999999999997px;background:#c8c8c8;"></div>
<div class="a" style="left:888px;top:225.9px;width:1.0px;height:198.49999999999997px;background:#c8c8c8;"></div>
<div class="a" style="left:918px;top:225.9px;width:1.0px;height:198.49999999999997px;background:#c8c8c8;"></div>
<div class="a" style="left:975px;top:225.9px;width:1.0px;height:198.49999999999997px;background:#c8c8c8;"></div>
<div class="a" style="left:1034px;top:225.9px;width:1.0px;height:198.49999999999997px;background:#c8c8c8;"></div>
<div class="a" style="left:1059px;top:225.9px;width:1.0px;height:198.49999999999997px;background:#a0a0a0;"></div>
<div class="a" style="left:128.3px;top:439.9px;width:930.7px;height:1.3px;background:#a8a8a8;"></div>
<div class="a" style="left:129.5px;top:441.2px;width:10.9px;height:17.6px;background:#f0f0f0;"></div>
<div class="a" style="left:140.4px;top:441.2px;width:1.1px;height:17.6px;background:#a0a0a0;"></div>
<div class="a" style="left:322px;top:441.2px;width:1.0px;height:17.6px;background:#c8c8c8;"></div>
<div class="a" style="left:541px;top:441.2px;width:1.0px;height:17.6px;background:#c8c8c8;"></div>
<div class="a" style="left:566px;top:441.2px;width:1.0px;height:17.6px;background:#c8c8c8;"></div>
<div class="a" style="left:605px;top:441.2px;width:1.0px;height:17.6px;background:#c8c8c8;"></div>
<div class="a" style="left:644px;top:441.2px;width:1.0px;height:17.6px;background:#c8c8c8;"></div>
<div class="a" style="left:724px;top:441.2px;width:1.0px;height:17.6px;background:#c8c8c8;"></div>
<div class="a" style="left:797px;top:441.2px;width:1.0px;height:17.6px;background:#c8c8c8;"></div>
<div class="a" style="left:823px;top:441.2px;width:1.0px;height:17.6px;background:#c8c8c8;"></div>
<div class="a" style="left:888px;top:441.2px;width:1.0px;height:17.6px;background:#c8c8c8;"></div>
<div class="a" style="left:918px;top:441.2px;width:1.0px;height:17.6px;background:#c8c8c8;"></div>
<div class="a" style="left:975px;top:441.2px;width:1.0px;height:17.6px;background:#c8c8c8;"></div>
<div class="a" style="left:1034px;top:441.2px;width:1.0px;height:17.6px;background:#c8c8c8;"></div>
<div class="a" style="left:1059px;top:439.9px;width:1.0px;height:19px;background:#b0b0b0;"></div>
<div class="a" style="left:128.3px;top:458.8px;width:931.7px;height:1px;background:#c0c0c0;"></div>
<div class="t" style="top:443.60px;font-size:13px;line-height:13px;color:#101010;left:143.10px;transform:scaleX(0.9261);transform-origin:0 0;">109</div>
<div class="t" style="top:443.80px;font-size:13px;line-height:13px;color:#101010;right:358.80px;transform:scaleX(0.9521);transform-origin:100% 0;">0,00</div>
<div class="t" style="top:443.80px;font-size:13px;line-height:13px;color:#101010;right:285.60px;transform:scaleX(0.9521);transform-origin:100% 0;">0,00</div>
<div class="a" style="left:1060.4px;top:175.6px;width:18.6px;height:284px;background:#f0f0f0;"></div>
<div class="a" style="left:1061px;top:196.1px;width:18px;height:22.7px;background:#cdcdcd;"></div>
<svg class="a" style="left:1064.5px;top:181px;" width="12" height="10" viewBox="0 0 12 10"><path d="M1.8 8.2 L6 4 L10.2 8.2" fill="none" stroke="#505050" stroke-width="1.9"/></svg>
<svg class="a" style="left:1064.5px;top:444.5px;" width="12" height="10" viewBox="0 0 12 10"><path d="M1.8 2.5 L6 6.7 L10.2 2.5" fill="none" stroke="#505050" stroke-width="1.9"/></svg>
<div class="a" style="left:128.3px;top:459.5px;width:950.7px;height:49px;background:#f0f0f0;"></div>
<div class="a" style="left:128.3px;top:459.5px;width:950.7px;height:1px;background:#fafafa;"></div>
<div class="t" style="top:465.20px;font-size:13px;line-height:13px;color:#1a1a1a;left:154.50px;transform:scaleX(1.1351);transform-origin:0 0;">Тип</div>
<div class="t" style="top:465.20px;font-size:13px;line-height:13px;color:#1a1a1a;left:248.80px;transform:scaleX(1.0857);transform-origin:0 0;">Прайс</div>
<div class="t" style="top:465.20px;font-size:13px;line-height:13px;color:#1a1a1a;left:346.50px;transform:scaleX(1.1033);transform-origin:0 0;">Нагрузка</div>
<div class="t" style="top:465.20px;font-size:13px;line-height:13px;color:#1a1a1a;left:419.50px;transform:scaleX(1.0410);transform-origin:0 0;">Срок годности</div>
<div class="t" style="top:465.20px;font-size:13px;line-height:13px;color:#1a1a1a;left:533.00px;transform:scaleX(1.0522);transform-origin:0 0;">Дата прайса</div>
<div class="a" style="left:134.3px;top:479.9px;width:81.19999999999999px;height:21.400000000000034px;background:#ffffff;"></div>
<div class="a" style="left:134.3px;top:479.9px;width:81.19999999999999px;height:1px;background:#a0a0a0;"></div>
<div class="a" style="left:134.3px;top:479.9px;width:1px;height:21.400000000000034px;background:#a0a0a0;"></div>
<div class="a" style="left:135.3px;top:480.9px;width:79.19999999999999px;height:1px;background:#696969;"></div>
<div class="a" style="left:135.3px;top:480.9px;width:1px;height:19.400000000000034px;background:#696969;"></div>
<div class="a" style="left:135.3px;top:499.3px;width:79.19999999999999px;height:1px;background:#e3e3e3;"></div>
<div class="a" style="left:213.5px;top:480.9px;width:1px;height:19.400000000000034px;background:#e3e3e3;"></div>
<div class="a" style="left:232.4px;top:479.9px;width:80.29999999999998px;height:21.400000000000034px;background:#ffffff;"></div>
<div class="a" style="left:232.4px;top:479.9px;width:80.29999999999998px;height:1px;background:#a0a0a0;"></div>
<div class="a" style="left:232.4px;top:479.9px;width:1px;height:21.400000000000034px;background:#a0a0a0;"></div>
<div class="a" style="left:233.4px;top:480.9px;width:78.29999999999998px;height:1px;background:#696969;"></div>
<div class="a" style="left:233.4px;top:480.9px;width:1px;height:19.400000000000034px;background:#696969;"></div>
<div class="a" style="left:233.4px;top:499.3px;width:78.29999999999998px;height:1px;background:#e3e3e3;"></div>
<div class="a" style="left:310.7px;top:480.9px;width:1px;height:19.400000000000034px;background:#e3e3e3;"></div>
<div class="a" style="left:328.2px;top:479.9px;width:80.30000000000001px;height:21.400000000000034px;background:#ffffff;"></div>
<div class="a" style="left:328.2px;top:479.9px;width:80.30000000000001px;height:1px;background:#a0a0a0;"></div>
<div class="a" style="left:328.2px;top:479.9px;width:1px;height:21.400000000000034px;background:#a0a0a0;"></div>
<div class="a" style="left:329.2px;top:480.9px;width:78.30000000000001px;height:1px;background:#696969;"></div>
<div class="a" style="left:329.2px;top:480.9px;width:1px;height:19.400000000000034px;background:#696969;"></div>
<div class="a" style="left:329.2px;top:499.3px;width:78.30000000000001px;height:1px;background:#e3e3e3;"></div>
<div class="a" style="left:406.5px;top:480.9px;width:1px;height:19.400000000000034px;background:#e3e3e3;"></div>
<div class="a" style="left:423.1px;top:479.9px;width:80.79999999999995px;height:21.400000000000034px;background:#ffffff;"></div>
<div class="a" style="left:423.1px;top:479.9px;width:80.79999999999995px;height:1px;background:#a0a0a0;"></div>
<div class="a" style="left:423.1px;top:479.9px;width:1px;height:21.400000000000034px;background:#a0a0a0;"></div>
<div class="a" style="left:424.1px;top:480.9px;width:78.79999999999995px;height:1px;background:#696969;"></div>
<div class="a" style="left:424.1px;top:480.9px;width:1px;height:19.400000000000034px;background:#696969;"></div>
<div class="a" style="left:424.1px;top:499.3px;width:78.79999999999995px;height:1px;background:#e3e3e3;"></div>
<div class="a" style="left:501.9px;top:480.9px;width:1px;height:19.400000000000034px;background:#e3e3e3;"></div>
<div class="a" style="left:520.7px;top:479.9px;width:129.79999999999995px;height:21.400000000000034px;background:#ffffff;"></div>
<div class="a" style="left:520.7px;top:479.9px;width:129.79999999999995px;height:1px;background:#a0a0a0;"></div>
<div class="a" style="left:520.7px;top:479.9px;width:1px;height:21.400000000000034px;background:#a0a0a0;"></div>
<div class="a" style="left:521.7px;top:480.9px;width:127.79999999999995px;height:1px;background:#696969;"></div>
<div class="a" style="left:521.7px;top:480.9px;width:1px;height:19.400000000000034px;background:#696969;"></div>
<div class="a" style="left:521.7px;top:499.3px;width:127.79999999999995px;height:1px;background:#e3e3e3;"></div>
<div class="a" style="left:648.5px;top:480.9px;width:1px;height:19.400000000000034px;background:#e3e3e3;"></div>
<div class="t" style="top:482.90px;font-size:13px;line-height:13px;color:#101010;left:425.90px;transform:scaleX(0.9081);transform-origin:0 0;">01.02.2027</div>
<div class="t" style="top:482.90px;font-size:13px;line-height:13px;color:#101010;left:522.90px;transform:scaleX(0.9079);transform-origin:0 0;">15.01.2026 15:17:06</div>
<div class="a" style="left:0px;top:507.0px;width:1079px;height:1px;background:#fafafa;"></div>
<div class="a" style="left:0px;top:508.1px;width:1079px;height:1.6px;background:#9c9c9c;"></div>
<div class="a" style="left:0px;top:509.7px;width:1079px;height:1.1px;background:#ffffff;"></div>
<div class="a" style="left:0px;top:510.8px;width:1079px;height:1px;background:#959595;"></div>
<div class="a" style="left:0px;top:511.8px;width:1079px;height:1.3px;background:#6e6e6e;"></div>
<div class="a" style="left:0px;top:566.3px;width:1079px;height:1px;background:#f2f2f2;"></div>
<div class="a" style="left:0px;top:567.3px;width:1079px;height:18px;background:#f0f0f0;"></div>
<div class="a" style="left:0px;top:567.8px;width:1079px;height:0.6px;background:#e4e4e4;"></div>
<div class="a" style="left:0px;top:567.9px;width:1079px;height:2.7px;background:#a0a0a0;"></div>
<div class="a" style="left:0px;top:581.2px;width:1079px;height:1.2px;background:#f8f8f8;"></div>
<div class="a" style="left:0px;top:583.6px;width:1079px;height:2.2px;background:#b4b4b4;"></div>
<div class="a" style="left:0px;top:585.5px;width:1079px;height:0.6px;background:#ffffff;"></div>
<svg class="a" style="left:197px;top:572.4px;" width="252" height="6" viewBox="0 0 252 6"><rect x="1.90" y="0.4" width="1.4" height="1.4" fill="#8c8c8c"/><rect x="4.75" y="3.3" width="1.4" height="1.4" fill="#8c8c8c"/><rect x="7.60" y="0.4" width="1.4" height="1.4" fill="#8c8c8c"/><rect x="10.45" y="3.3" width="1.4" height="1.4" fill="#8c8c8c"/><rect x="13.30" y="0.4" width="1.4" height="1.4" fill="#8c8c8c"/><rect x="16.15" y="3.3" width="1.4" height="1.4" fill="#8c8c8c"/><rect x="19.00" y="0.4" width="1.4" height="1.4" fill="#8c8c8c"/><rect x="21.85" y="3.3" width="1.4" height="1.4" fill="#8c8c8c"/><rect x="24.70" y="0.4" width="1.4" height="1.4" fill="#8c8c8c"/><rect x="27.55" y="3.3" width="1.4" height="1.4" fill="#8c8c8c"/><rect x="30.40" y="0.4" width="1.4" height="1.4" fill="#8c8c8c"/><rect x="33.25" y="3.3" width="1.4" height="1.4" fill="#8c8c8c"/><rect x="36.10" y="0.4" width="1.4" height="1.4" fill="#8c8c8c"/><rect x="38.95" y="3.3" width="1.4" height="1.4" fill="#8c8c8c"/><rect x="41.80" y="0.4" width="1.4" height="1.4" fill="#8c8c8c"/><rect x="44.65" y="3.3" width="1.4" height="1.4" fill="#8c8c8c"/><rect x="47.50" y="0.4" width="1.4" height="1.4" fill="#8c8c8c"/><rect x="50.35" y="3.3" width="1.4" height="1.4" fill="#8c8c8c"/><rect x="53.20" y="0.4" width="1.4" height="1.4" fill="#8c8c8c"/><rect x="56.05" y="3.3" width="1.4" height="1.4" fill="#8c8c8c"/><rect x="58.90" y="0.4" width="1.4" height="1.4" fill="#8c8c8c"/><rect x="61.75" y="3.3" width="1.4" height="1.4" fill="#8c8c8c"/><rect x="64.60" y="0.4" width="1.4" height="1.4" fill="#8c8c8c"/><rect x="67.45" y="3.3" width="1.4" height="1.4" fill="#8c8c8c"/><rect x="70.30" y="0.4" width="1.4" height="1.4" fill="#8c8c8c"/><rect x="73.15" y="3.3" width="1.4" height="1.4" fill="#8c8c8c"/><rect x="76.00" y="0.4" width="1.4" height="1.4" fill="#8c8c8c"/><rect x="78.85" y="3.3" width="1.4" height="1.4" fill="#8c8c8c"/><rect x="81.70" y="0.4" width="1.4" height="1.4" fill="#8c8c8c"/><rect x="84.55" y="3.3" width="1.4" height="1.4" fill="#8c8c8c"/><rect x="87.40" y="0.4" width="1.4" height="1.4" fill="#8c8c8c"/><rect x="90.25" y="3.3" width="1.4" height="1.4" fill="#8c8c8c"/><rect x="93.10" y="0.4" width="1.4" height="1.4" fill="#8c8c8c"/><rect x="95.95" y="3.3" width="1.4" height="1.4" fill="#8c8c8c"/><rect x="98.80" y="0.4" width="1.4" height="1.4" fill="#8c8c8c"/><rect x="101.65" y="3.3" width="1.4" height="1.4" fill="#8c8c8c"/><rect x="104.50" y="0.4" width="1.4" height="1.4" fill="#8c8c8c"/><rect x="107.35" y="3.3" width="1.4" height="1.4" fill="#8c8c8c"/><rect x="110.20" y="0.4" width="1.4" height="1.4" fill="#8c8c8c"/><rect x="113.05" y="3.3" width="1.4" height="1.4" fill="#8c8c8c"/><rect x="115.90" y="0.4" width="1.4" height="1.4" fill="#8c8c8c"/><rect x="118.75" y="3.3" width="1.4" height="1.4" fill="#8c8c8c"/><rect x="121.60" y="0.4" width="1.4" height="1.4" fill="#8c8c8c"/><rect x="124.45" y="3.3" width="1.4" height="1.4" fill="#8c8c8c"/><rect x="127.30" y="0.4" width="1.4" height="1.4" fill="#8c8c8c"/><rect x="130.15" y="3.3" width="1.4" height="1.4" fill="#8c8c8c"/><rect x="133.00" y="0.4" width="1.4" height="1.4" fill="#8c8c8c"/><rect x="135.85" y="3.3" width="1.4" height="1.4" fill="#8c8c8c"/><rect x="138.70" y="0.4" width="1.4" height="1.4" fill="#8c8c8c"/><rect x="141.55" y="3.3" width="1.4" height="1.4" fill="#8c8c8c"/><rect x="144.40" y="0.4" width="1.4" height="1.4" fill="#8c8c8c"/><rect x="147.25" y="3.3" width="1.4" height="1.4" fill="#8c8c8c"/><rect x="150.10" y="0.4" width="1.4" height="1.4" fill="#8c8c8c"/><rect x="152.95" y="3.3" width="1.4" height="1.4" fill="#8c8c8c"/><rect x="155.80" y="0.4" width="1.4" height="1.4" fill="#8c8c8c"/><rect x="158.65" y="3.3" width="1.4" height="1.4" fill="#8c8c8c"/><rect x="161.50" y="0.4" width="1.4" height="1.4" fill="#8c8c8c"/><rect x="164.35" y="3.3" width="1.4" height="1.4" fill="#8c8c8c"/><rect x="167.20" y="0.4" width="1.4" height="1.4" fill="#8c8c8c"/><rect x="170.05" y="3.3" width="1.4" height="1.4" fill="#8c8c8c"/><rect x="172.90" y="0.4" width="1.4" height="1.4" fill="#8c8c8c"/><rect x="175.75" y="3.3" width="1.4" height="1.4" fill="#8c8c8c"/><rect x="178.60" y="0.4" width="1.4" height="1.4" fill="#8c8c8c"/><rect x="181.45" y="3.3" width="1.4" height="1.4" fill="#8c8c8c"/><rect x="184.30" y="0.4" width="1.4" height="1.4" fill="#8c8c8c"/><rect x="187.15" y="3.3" width="1.4" height="1.4" fill="#8c8c8c"/><rect x="190.00" y="0.4" width="1.4" height="1.4" fill="#8c8c8c"/><rect x="192.85" y="3.3" width="1.4" height="1.4" fill="#8c8c8c"/><rect x="195.70" y="0.4" width="1.4" height="1.4" fill="#8c8c8c"/><rect x="198.55" y="3.3" width="1.4" height="1.4" fill="#8c8c8c"/><rect x="201.40" y="0.4" width="1.4" height="1.4" fill="#8c8c8c"/><rect x="204.25" y="3.3" width="1.4" height="1.4" fill="#8c8c8c"/><rect x="207.10" y="0.4" width="1.4" height="1.4" fill="#8c8c8c"/><rect x="209.95" y="3.3" width="1.4" height="1.4" fill="#8c8c8c"/><rect x="212.80" y="0.4" width="1.4" height="1.4" fill="#8c8c8c"/><rect x="215.65" y="3.3" width="1.4" height="1.4" fill="#8c8c8c"/><rect x="218.50" y="0.4" width="1.4" height="1.4" fill="#8c8c8c"/><rect x="221.35" y="3.3" width="1.4" height="1.4" fill="#8c8c8c"/><rect x="224.20" y="0.4" width="1.4" height="1.4" fill="#8c8c8c"/><rect x="227.05" y="3.3" width="1.4" height="1.4" fill="#8c8c8c"/><rect x="229.90" y="0.4" width="1.4" height="1.4" fill="#8c8c8c"/><rect x="232.75" y="3.3" width="1.4" height="1.4" fill="#8c8c8c"/><rect x="235.60" y="0.4" width="1.4" height="1.4" fill="#8c8c8c"/><rect x="238.45" y="3.3" width="1.4" height="1.4" fill="#8c8c8c"/><rect x="241.30" y="0.4" width="1.4" height="1.4" fill="#8c8c8c"/><rect x="244.15" y="3.3" width="1.4" height="1.4" fill="#8c8c8c"/><rect x="247.00" y="0.4" width="1.4" height="1.4" fill="#8c8c8c"/><rect x="249.85" y="3.3" width="1.4" height="1.4" fill="#8c8c8c"/></svg>
<div class="a" style="left:0px;top:586.1px;width:1079px;height:38.4px;background:#f0f0f0;"></div>
<div class="a" style="left:0px;top:624.0px;width:1079px;height:1.2px;background:#a0a0a0;"></div>
<div class="a" style="left:0px;top:625.2px;width:1079px;height:42px;background:#ffffff;"></div>
<div class="a" style="left:0px;top:642.9px;width:1079px;height:1px;background:#c8c8c8;"></div>
<div class="a" style="left:349.8px;top:586.1px;width:1.1px;height:38px;background:#a0a0a0;"></div>
<div class="a" style="left:350.90000000000003px;top:586.6px;width:1px;height:37.4px;background:#ffffff;"></div>
<div class="a" style="left:349.8px;top:625.2px;width:1.0px;height:42px;background:#c8c8c8;"></div>
<div class="a" style="left:421.8px;top:586.1px;width:1.1px;height:38px;background:#a0a0a0;"></div>
<div class="a" style="left:422.90000000000003px;top:586.6px;width:1px;height:37.4px;background:#ffffff;"></div>
<div class="a" style="left:421.8px;top:625.2px;width:1.0px;height:42px;background:#c8c8c8;"></div>
<div class="a" style="left:494.3px;top:586.1px;width:1.1px;height:38px;background:#a0a0a0;"></div>
<div class="a" style="left:495.40000000000003px;top:586.6px;width:1px;height:37.4px;background:#ffffff;"></div>
<div class="a" style="left:494.3px;top:625.2px;width:1.0px;height:42px;background:#c8c8c8;"></div>
<div class="a" style="left:566.6px;top:586.1px;width:1.1px;height:38px;background:#a0a0a0;"></div>
<div class="a" style="left:567.7px;top:586.6px;width:1px;height:37.4px;background:#ffffff;"></div>
<div class="a" style="left:566.6px;top:625.2px;width:1.0px;height:42px;background:#c8c8c8;"></div>
<div class="a" style="left:639.8000000000001px;top:586.1px;width:1.1px;height:38px;background:#a0a0a0;"></div>
<div class="a" style="left:640.9000000000001px;top:586.6px;width:1px;height:37.4px;background:#ffffff;"></div>
<div class="a" style="left:639.8000000000001px;top:625.2px;width:1.0px;height:42px;background:#c8c8c8;"></div>
<div class="a" style="left:711.8000000000001px;top:586.1px;width:1.1px;height:38px;background:#a0a0a0;"></div>
<div class="a" style="left:712.9000000000001px;top:586.6px;width:1px;height:37.4px;background:#ffffff;"></div>
<div class="a" style="left:711.8000000000001px;top:625.2px;width:1.0px;height:42px;background:#c8c8c8;"></div>
<div class="a" style="left:784.3000000000001px;top:586.1px;width:1.1px;height:38px;background:#a0a0a0;"></div>
<div class="a" style="left:785.4000000000001px;top:586.6px;width:1px;height:37.4px;background:#ffffff;"></div>
<div class="a" style="left:784.3000000000001px;top:625.2px;width:1.0px;height:42px;background:#c8c8c8;"></div>
<div class="a" style="left:856.8000000000001px;top:586.1px;width:1.1px;height:38px;background:#a0a0a0;"></div>
<div class="a" style="left:857.9000000000001px;top:586.6px;width:1px;height:37.4px;background:#ffffff;"></div>
<div class="a" style="left:856.8000000000001px;top:625.2px;width:1.0px;height:42px;background:#c8c8c8;"></div>
<div class="a" style="left:929.4000000000001px;top:586.1px;width:1.1px;height:38px;background:#a0a0a0;"></div>
<div class="a" style="left:930.5000000000001px;top:586.6px;width:1px;height:37.4px;background:#ffffff;"></div>
<div class="a" style="left:929.4000000000001px;top:625.2px;width:1.0px;height:42px;background:#c8c8c8;"></div>
<div class="a" style="left:1001.6px;top:586.1px;width:1.1px;height:38px;background:#a0a0a0;"></div>
<div class="a" style="left:1002.7px;top:586.6px;width:1px;height:37.4px;background:#ffffff;"></div>
<div class="a" style="left:1001.6px;top:625.2px;width:1.0px;height:42px;background:#c8c8c8;"></div>
<div class="a" style="left:350.8px;top:625.2px;width:71px;height:17.4px;background:#000000;"></div>
<div class="a" style="left:785.1px;top:625.2px;width:71.7px;height:17.2px;background:#ffbcbc;"></div>
<div class="a" style="left:1002.4px;top:625.2px;width:76.6px;height:17.2px;background:#ffff80;"></div>
<div class="t" style="top:598.30px;font-size:13px;line-height:13px;color:#1a1a1a;left:39.74px;transform:scaleX(1.0530);transform-origin:50% 0;">Наименование</div>
<div class="t" style="top:598.30px;font-size:13px;line-height:13px;color:#1a1a1a;left:362.55px;transform:scaleX(1.0875);transform-origin:50% 0;">Остаток</div>
<div class="t" style="top:598.30px;font-size:13px;line-height:13px;color:#1a1a1a;left:431.75px;transform:scaleX(1.0369);transform-origin:50% 0;">Продажи</div>
<div class="t" style="top:590.60px;font-size:13px;line-height:13px;color:#1a1a1a;left:504.05px;transform:scaleX(1.0369);transform-origin:50% 0;">Продажи</div>
<div class="t" style="top:606.00px;font-size:13px;line-height:13px;color:#1a1a1a;left:523.97px;transform:scaleX(0.9883);transform-origin:50% 0;">30</div>
<div class="t" style="top:590.60px;font-size:13px;line-height:13px;color:#1a1a1a;left:576.65px;transform:scaleX(1.0369);transform-origin:50% 0;">Продажи</div>
<div class="t" style="top:606.00px;font-size:13px;line-height:13px;color:#1a1a1a;left:592.95px;transform:scaleX(0.9353);transform-origin:50% 0;">180</div>
<div class="t" style="top:598.30px;font-size:13px;line-height:13px;color:#1a1a1a;left:654.28px;transform:scaleX(1.0644);transform-origin:50% 0;">Отказы</div>
<div class="t" style="top:598.30px;font-size:13px;line-height:13px;color:#1a1a1a;left:733.07px;transform:scaleX(1.0331);transform-origin:50% 0;">Цена</div>
<div class="a" style="left:786.2px;top:0;width:71.39999999999998px;height:667px;overflow:hidden"><div class="a" style="left:-786.2px;top:0;width:1079px;height:667px"><div class="t" style="top:598.30px;font-size:13px;line-height:13px;color:#1a1a1a;left:782.68px;transform:scaleX(1.1244);transform-origin:50% 0;">Потребность</div></div></div>
<div class="a" style="left:858.7px;top:0;width:71.5px;height:667px;overflow:hidden"><div class="a" style="left:-858.7px;top:0;width:1079px;height:667px"><div class="t" style="top:590.50px;font-size:13px;line-height:13px;color:#1a1a1a;left:852.15px;transform:scaleX(1.1487);transform-origin:50% 0;">Минимальное</div></div></div>
<div class="t" style="top:606.00px;font-size:13px;line-height:13px;color:#1a1a1a;left:874.56px;transform:scaleX(1.0675);transform-origin:50% 0;">кол-во</div>
<div class="t" style="top:598.30px;font-size:13px;line-height:13px;color:#1a1a1a;left:947.22px;transform:scaleX(1.0364);transform-origin:50% 0;">Бронь</div>
<div class="t" style="top:598.30px;font-size:13px;line-height:13px;color:#1a1a1a;left:1012.50px;transform:scaleX(1.0507);transform-origin:50% 0;">Излишки</div>
<svg class="a" style="left:668px;top:13px;" width="34" height="33" viewBox="0 0 34 33">
<defs><pattern id="mp" width="2.6" height="2.6" patternUnits="userSpaceOnUse"><rect width="2.6" height="2.6" fill="#e4e4e4"/><rect width="1.3" height="1.3" fill="#a6a6a6"/><rect x="1.3" y="1.3" width="1.3" height="1.3" fill="#b8b8b8"/></pattern>
<radialGradient id="gg" cx="45%" cy="35%" r="65%"><stop offset="0" stop-color="#8ad838"/><stop offset="1" stop-color="#3c9408"/></radialGradient></defs>
<path d="M2.4 7.4 L25.5 7.4 L24.6 19.8 L10.6 19.8 L2.6 10 Z" fill="url(#mp)" stroke="#9a9a9a" stroke-width="1.3" stroke-linejoin="round"/>
<path d="M25.5 7.4 L28.9 3.6" stroke="#a8a8a8" stroke-width="1.2"/>
<circle cx="28.9" cy="3.6" r="2.4" fill="#f0a830" stroke="#fcd890" stroke-width="0.9"/>
<path d="M5 24.4 L19 24.4" stroke="#c0c0c0" stroke-width="1.6" stroke-linecap="round"/>
<circle cx="9.5" cy="25.8" r="4.1" fill="#7c7c7c"/><circle cx="9.5" cy="25.8" r="2" fill="none" stroke="#9c9c9c" stroke-width="0.9"/>
<circle cx="23.8" cy="23.8" r="6.9" fill="url(#gg)" stroke="#7ccc3c" stroke-width="1"/>
<path d="M23.8 19.8 V27.8 M19.8 23.8 H27.8" stroke="#f0ffe0" stroke-width="2.3"/>
</svg>
<svg class="a" style="left:784px;top:12px;" width="32" height="34" viewBox="0 0 32 34">
<defs><radialGradient id="bg1" cx="40%" cy="35%" r="70%"><stop offset="0" stop-color="#7cc8f8"/><stop offset="0.6" stop-color="#2a8ad8"/><stop offset="1" stop-color="#1a62b0"/></radialGradient></defs>
<path d="M3.4 2.8 L14.5 7.8 Q8.5 9.5 5.5 15.1 L3.4 15.1 Z" fill="#3aa0e8" stroke="#2a70b8" stroke-width="0.8"/>
<path d="M20.2 10.8 L29.3 17.7 L20.2 23.9 Q22.5 17.7 20.2 10.8 Z" fill="#3aa0e8" stroke="#2a70b8" stroke-width="0.8"/>
<path d="M3.4 19.7 L5.5 19.7 Q8.5 25 14.5 26.5 L3.4 31.6 Z" fill="#3aa0e8" stroke="#2a70b8" stroke-width="0.8"/>
<circle cx="13.1" cy="16.8" r="7.1" fill="url(#bg1)" stroke="#84d0ff" stroke-width="1"/>
<circle cx="14.2" cy="30.2" r="1.2" fill="#405060"/>
</svg>
<svg class="a" style="left:1015px;top:12px;" width="34" height="34" viewBox="0 0 34 34">
<defs><linearGradient id="dg" x1="0" y1="0" x2="0" y2="1"><stop offset="0" stop-color="#3a3a3a"/><stop offset="1" stop-color="#707070"/></linearGradient>
<linearGradient id="og" x1="0" y1="0" x2="1" y2="0"><stop offset="0" stop-color="#c88a40"/><stop offset="1" stop-color="#f0c080"/></linearGradient></defs>
<rect x="9" y="6" width="14.5" height="24.6" fill="url(#dg)" stroke="#d8a050" stroke-width="0.9"/>
<path d="M23.3 6 L30.7 2.4 L30.7 31.6 L23.3 30.6 Z" fill="url(#og)" stroke="#b07028" stroke-width="0.6"/>
<rect x="2" y="30.2" width="22" height="1.3" fill="#606060"/>
<rect x="24.7" y="16.5" width="1" height="3" fill="#ffe060"/>
</svg>
<svg class="a" style="left:843px;top:62px;" width="36" height="32" viewBox="0 0 36 32">
<defs><linearGradient id="rg" x1="1" y1="0" x2="0" y2="1"><stop offset="0" stop-color="#3c82c8"/><stop offset="1" stop-color="#7ab8ec"/></linearGradient></defs>
<path d="M22.1 2 L31 2 L4 30.2 L2.7 30.2 L2.7 21.1 Z" fill="url(#rg)" stroke="#3a78b8" stroke-width="0.6"/>
<path d="M22.5 2.3 L3.5 21.5" stroke="#a8d4f8" stroke-width="1"/>
<path d="M4.2 5.6 L12.2 13.2 M5.6 4.4 L13.4 12" stroke="#4a88c8" stroke-width="1"/>
<path d="M14.1 11.2 V17.2 M11.1 14.2 H17.1" stroke="#ffffff" stroke-width="1.3"/>
<path d="M14.3 24.5 H21.5 M17.9 21 V28" stroke="#404040" stroke-width="2"/>
<path d="M31 17.6 L31 16.6 L23.4 16.6 L27.6 22.4 L23.4 28.3 L31 28.3 L31 27.2" fill="none" stroke="#555555" stroke-width="1.4"/>
</svg>
<div class="a" style="left:876px;top:51px;width:103px;height:2px;background:#ffffff;"></div>
<div class="a" style="left:876px;top:53px;width:103px;height:1px;background:#a8a8a8;"></div>
<svg class="a" style="left:0px;top:0px;pointer-events:none;" width="1079" height="120" viewBox="0 0 1079 120">
<rect x="869" y="5.9" width="113.1" height="54.95" rx="14" ry="14" fill="none" stroke="#ff0000" stroke-width="6"/>
<path d="M763.0 96.9 L884.5 50.6" stroke="#ff0000" stroke-width="5.6" stroke-linecap="butt"/>
<path d="M878.9 42.2 L898.9 44.3 L885.8 58.0 Z" fill="#ff0000"/>
<path d="M925.6 32.6 L925.6 47.8 L929.2 44.5 L931.8 50 L934.2 48.8 L931.6 43.5 L936.6 43.5 Z" fill="#ffffff" stroke="#000" stroke-width="1" stroke-linejoin="miter"/>
</svg>
</body></html>
